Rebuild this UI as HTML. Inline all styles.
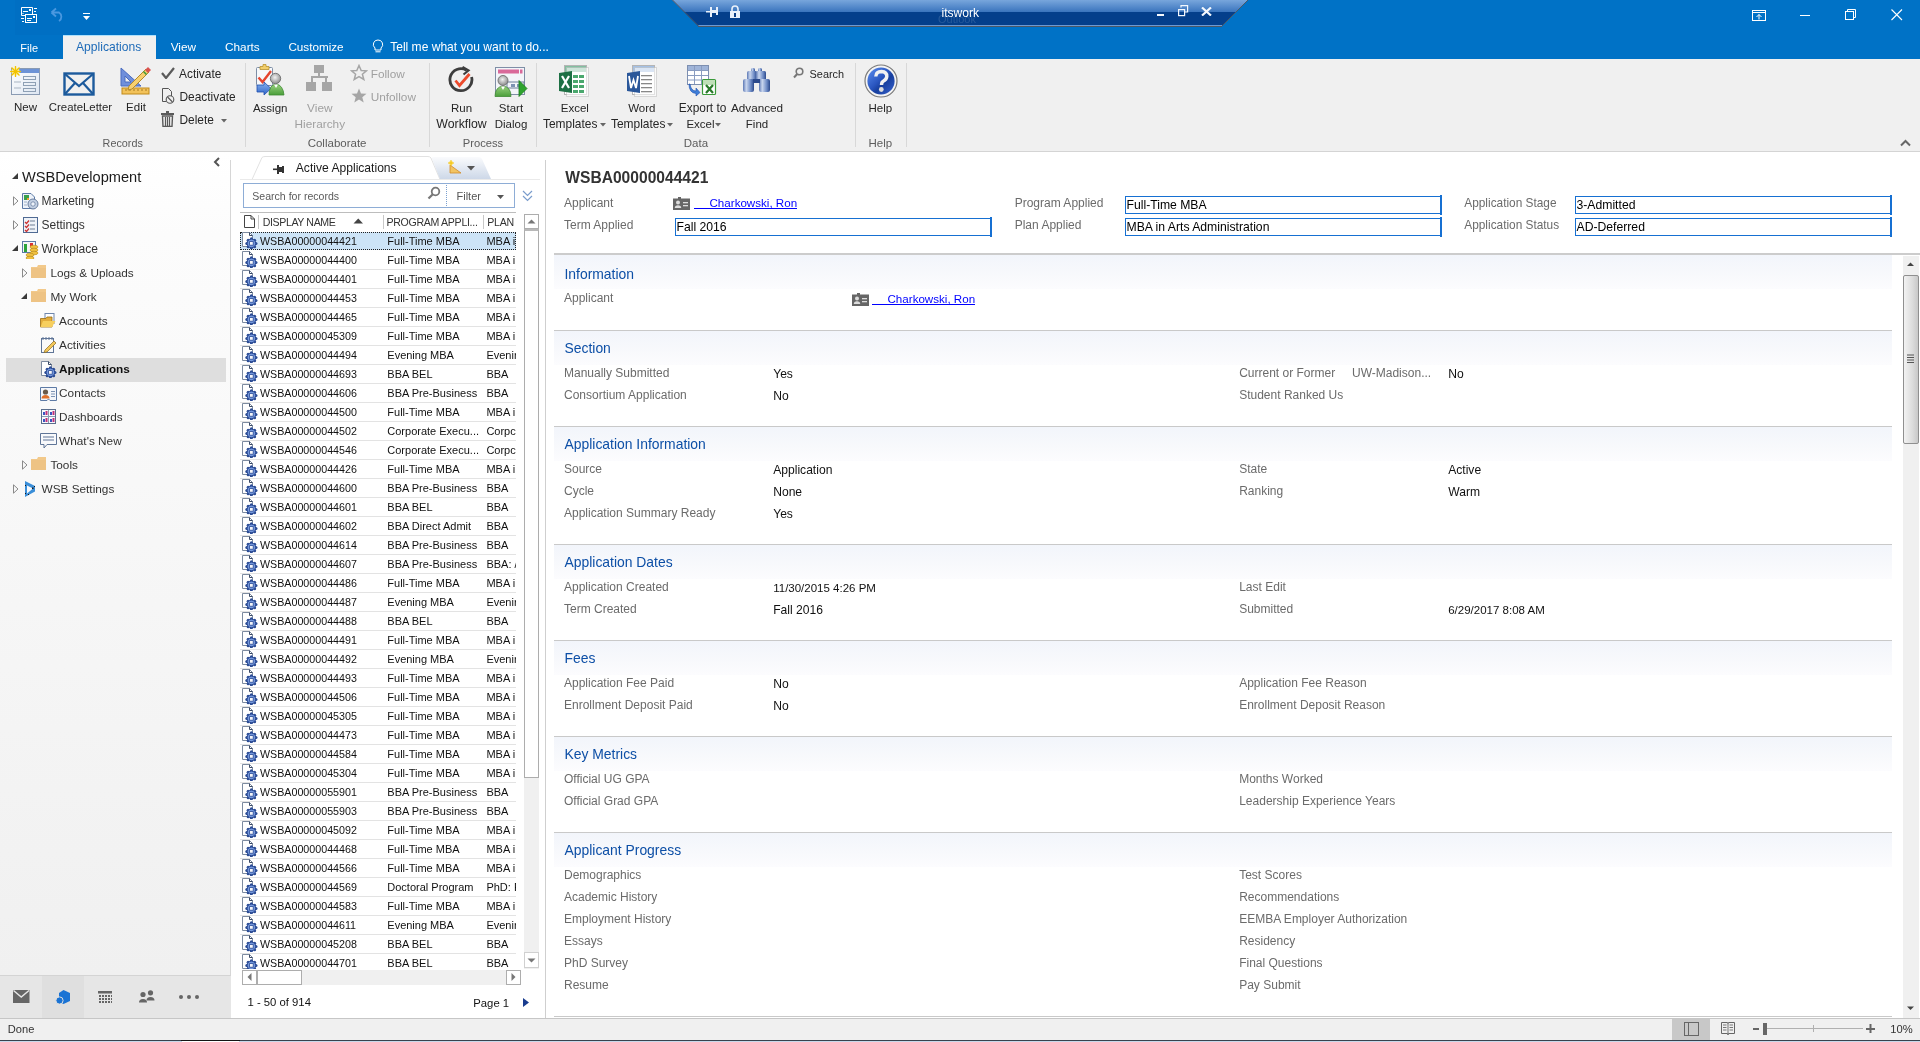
<!DOCTYPE html>
<html><head><meta charset="utf-8"><title>Applications</title>
<style>
html,body{margin:0;padding:0;}
body{width:1920px;height:1042px;overflow:hidden;position:relative;background:#f0f0f0;font-family:"Liberation Sans", sans-serif;}
.t{position:absolute;white-space:nowrap;}
#root{position:absolute;left:0;top:0;width:1920px;height:1042px;overflow:hidden;will-change:transform;}
.r{position:absolute;}
</style></head><body>
<div id="root"><div class="r" style="left:0px;top:0px;width:1920px;height:59px;background:#0072c6;"></div><div class="r" style="left:15px;top:0px;width:85px;height:35px;background:#006fc3;"></div><svg class="r" style="left:20px;top:6px;" width="18" height="18" viewBox="0 0 18 18"><g fill="none" stroke="#fff" stroke-width="1"><path d="M12.5 8.5 V1.5 H1.5 V9.5 H5"/><rect x="5.5" y="8.5" width="11" height="8"/></g><g fill="#fff"><rect x="3" y="5" width="5" height="1"/><rect x="9" y="3" width="2" height="2"/><rect x="2.5" y="7" width="1" height="1"/><rect x="14" y="2" width="3" height="1"/><rect x="14" y="5" width="2" height="1"/><rect x="1" y="12" width="3" height="1"/><rect x="2" y="15" width="2" height="1"/><rect x="7" y="12" width="5" height="1"/><rect x="7" y="14" width="4" height="1"/><rect x="13" y="10" width="2" height="2"/></g></svg><svg class="r" style="left:50px;top:7px;" width="16" height="15" viewBox="0 0 16 15"><path d="M1.5 5.5 L6 1.5 M1.5 5.5 L6 9.5 M1.5 5.5 H9 A5 5 0 0 1 9 14" fill="none" stroke="#4a98e0" stroke-width="1.8"/></svg><svg class="r" style="left:83px;top:13px;" width="8" height="8" viewBox="0 0 8 8"><rect x="0" y="0" width="7" height="1" fill="#fff"/><path d="M0 3 H7 L3.5 7 Z" fill="#fff"/></svg><svg class="r" style="left:672px;top:0px;" width="577" height="28" viewBox="0 0 577 28"><defs><linearGradient id="rg" x1="0" y1="0" x2="0" y2="1"><stop offset="0" stop-color="#78a6dc"/><stop offset="1" stop-color="#3a74bd"/></linearGradient></defs>
<polygon points="0,0 576,0 550,26 26,26" fill="#043f8b"/>
<polygon points="0,0 576,0 564,12 12,12" fill="url(#rg)"/>
<line x1="26" y1="25.5" x2="550" y2="25.5" stroke="#6e9ad2" stroke-width="1"/>
<line x1="26" y1="26.5" x2="550" y2="26.5" stroke="#4c5866" stroke-width="1"/>
<line x1="0.5" y1="0" x2="26.5" y2="26" stroke="#4c5866" stroke-width="1"/>
<line x1="576" y1="0" x2="550" y2="26" stroke="#4c5866" stroke-width="1"/></svg><svg class="r" style="left:706px;top:6px;" width="14" height="12" viewBox="0 0 14 12"><g fill="#e8f0fa"><rect x="0" y="5" width="5" height="1.5"/><rect x="4" y="1" width="2" height="10"/><rect x="5" y="4" width="6" height="3"/><rect x="10" y="1" width="2" height="8"/></g></svg><svg class="r" style="left:729px;top:5px;" width="12" height="13" viewBox="0 0 12 13"><path d="M3 6 V4 A3 3 0 0 1 9 4 V6" fill="none" stroke="#e8f0fa" stroke-width="1.6"/><rect x="1" y="6" width="10" height="7" fill="#e8f0fa"/><rect x="5" y="8" width="2" height="4" fill="#0c3f86"/></svg><div class="t" style="left:941.5px;top:3px;font-size:12.1px;line-height:20px;color:#ffffff;font-weight:normal;">itswork</div><div class="t" style="left:938.0px;top:9px;font-size:11px;line-height:20px;color:rgba(160,180,210,0.22);font-weight:normal;">Outlook</div><div class="r" style="left:1157px;top:14px;width:7px;height:2px;background:#f4f8fd;"></div><svg class="r" style="left:1178px;top:5px;" width="11" height="12" viewBox="0 0 11 12"><g fill="none" stroke="#f4f8fd" stroke-width="1.2"><rect x="0.6" y="4.6" width="6" height="6"/><path d="M3 2.6 V0.6 H9.6 V7 H7"/></g></svg><svg class="r" style="left:1201px;top:7px;" width="11" height="9" viewBox="0 0 11 9"><path d="M1 0.5 L10 8.5 M10 0.5 L1 8.5" stroke="#f4f8fd" stroke-width="2.2"/></svg><svg class="r" style="left:1752px;top:10px;" width="14" height="11" viewBox="0 0 14 11"><g fill="none" stroke="#fff" stroke-width="1"><rect x="0.5" y="0.5" width="13" height="10"/><line x1="0.5" y1="2.5" x2="13.5" y2="2.5"/><path d="M7 9.5 V4.5 M4.5 7 L7 4.5 L9.5 7"/></g></svg><div class="r" style="left:1800px;top:15px;width:10px;height:1px;background:#fff;"></div><svg class="r" style="left:1845px;top:9px;" width="12" height="12" viewBox="0 0 12 12"><g fill="none" stroke="#fff" stroke-width="1"><rect x="0.5" y="2.5" width="8" height="8"/><path d="M2.5 2.5 V0.5 H10.5 V8.5 H8.5"/></g></svg><svg class="r" style="left:1891px;top:9px;" width="12" height="12" viewBox="0 0 12 12"><path d="M0.5 0.5 L11 11 M11 0.5 L0.5 11" stroke="#fff" stroke-width="1.1"/></svg><div class="r" style="left:63px;top:35px;width:93px;height:24px;background:#f0f0f0;border-top:1px solid #aee0fb;box-sizing:border-box;"></div><div class="t" style="left:20.3px;top:38px;font-size:11px;line-height:20px;color:#ffffff;font-weight:normal;">File</div><div class="t" style="left:76.0px;top:37px;font-size:12.1px;line-height:20px;color:#1e6bb8;font-weight:normal;">Applications</div><div class="t" style="left:170.7px;top:37px;font-size:11.8px;line-height:20px;color:#ffffff;font-weight:normal;">View</div><div class="t" style="left:225.0px;top:37px;font-size:11.8px;line-height:20px;color:#ffffff;font-weight:normal;">Charts</div><div class="t" style="left:288.4px;top:37px;font-size:11.7px;line-height:20px;color:#ffffff;font-weight:normal;">Customize</div><svg class="r" style="left:372px;top:39px;" width="12" height="15" viewBox="0 0 12 15"><path d="M6 1 A4.5 4.5 0 0 0 3 9 V11 H9 V9 A4.5 4.5 0 0 0 6 1 Z" fill="none" stroke="#fff" stroke-width="1"/><line x1="3.5" y1="12.8" x2="8.5" y2="12.8" stroke="#fff" stroke-width="1"/></svg><div class="t" style="left:390.2px;top:37px;font-size:12.05px;line-height:20px;color:#ffffff;font-weight:normal;">Tell me what you want to do...</div><div class="r" style="left:0px;top:59px;width:1920px;height:92px;background:#f0f0f0;"></div><div class="r" style="left:0px;top:151px;width:1920px;height:1px;background:#d4d4d4;"></div><div class="r" style="left:245px;top:63px;width:1px;height:84px;background:#d8d8d8;"></div><div class="r" style="left:429px;top:63px;width:1px;height:84px;background:#d8d8d8;"></div><div class="r" style="left:536px;top:63px;width:1px;height:84px;background:#d8d8d8;"></div><div class="r" style="left:855px;top:63px;width:1px;height:84px;background:#d8d8d8;"></div><div class="r" style="left:906px;top:63px;width:1px;height:84px;background:#d8d8d8;"></div><svg class="r" style="left:10px;top:66px;" width="31" height="29" viewBox="0 0 31 29"><defs><linearGradient id="ng" x1="0" y1="0" x2="1" y2="1"><stop offset="0" stop-color="#ffffff"/><stop offset="1" stop-color="#dde6f2"/></linearGradient></defs>
<rect x="1.5" y="2.5" width="28" height="26" fill="url(#ng)" stroke="#8a9bb3"/>
<rect x="2" y="3" width="27" height="4" fill="#6d93d6"/>
<g fill="none" stroke="#8ea0b5"><rect x="13.5" y="10.5" width="12" height="3"/><rect x="13.5" y="16.5" width="12" height="3"/><rect x="13.5" y="22.5" width="12" height="3"/></g>
<g stroke="#a9b5c3"><line x1="4" y1="16" x2="11" y2="16"/><line x1="4" y1="22" x2="11" y2="22"/></g>
<circle cx="5.5" cy="5.5" r="4" fill="#fff3a0"/><g stroke="#f2c200" stroke-width="1.3"><line x1="5.5" y1="0" x2="5.5" y2="11"/><line x1="0" y1="5.5" x2="11" y2="5.5"/><line x1="1.5" y1="1.5" x2="9.5" y2="9.5"/><line x1="9.5" y1="1.5" x2="1.5" y2="9.5"/></g></svg><div class="t" style="left:-174.5px;width:400px;text-align:center;top:97px;font-size:11.5px;line-height:20px;color:#262626;font-weight:normal;">New</div><svg class="r" style="left:63px;top:72px;" width="33" height="25" viewBox="0 0 33 25"><rect x="1.5" y="1.5" width="29" height="21" fill="none" stroke="#1c5a9c" stroke-width="2.4"/><path d="M2 2 L16 14 L30 2 M2 22 L12 11 M30 22 L20 11" fill="none" stroke="#1c5a9c" stroke-width="2.2"/></svg><div class="t" style="left:48.8px;top:97px;font-size:11.4px;line-height:20px;color:#262626;font-weight:normal;">CreateLetter</div><svg class="r" style="left:120px;top:66px;" width="31" height="30" viewBox="0 0 31 30"><path d="M1 2 L21 20 H1 Z" fill="#6f8fdb" stroke="#4a6cc0"/><path d="M5 10 L11 16 H5 Z" fill="#f0f0f0" stroke="#4a6cc0"/>
<rect x="2" y="22" width="27" height="6" fill="#f2c25a" stroke="#c08a1a"/><g stroke="#a87a20"><line x1="6" y1="23" x2="6" y2="25"/><line x1="10" y1="23" x2="10" y2="25"/><line x1="14" y1="23" x2="14" y2="25"/><line x1="18" y1="23" x2="18" y2="25"/><line x1="22" y1="23" x2="22" y2="25"/><line x1="26" y1="23" x2="26" y2="25"/></g>
<path d="M9 20 L26 3 L29 6 L12 23 L8 24 Z" fill="#f7d070" stroke="#b58a2a"/><path d="M25 4 L28 1 L31 4 L28 7 Z" fill="#d9534f"/><path d="M23.5 5.5 L26.5 8.5" stroke="#3a9a3a" stroke-width="1.5"/></svg><div class="t" style="left:-64.0px;width:400px;text-align:center;top:97px;font-size:11.5px;line-height:20px;color:#262626;font-weight:normal;">Edit</div><svg class="r" style="left:161px;top:67px;" width="14" height="12" viewBox="0 0 14 12"><path d="M1 6 L5 11 L13 1" fill="none" stroke="#5a5a5a" stroke-width="2.2"/></svg><div class="t" style="left:179.0px;top:64px;font-size:11.9px;line-height:20px;color:#262626;font-weight:normal;">Activate</div><svg class="r" style="left:162px;top:88px;" width="13" height="16" viewBox="0 0 13 16"><path d="M0.5 0.5 H6.5 L9.5 3.5 V8 M0.5 0.5 V13.5 H4" fill="none" stroke="#555" stroke-width="1"/><circle cx="8" cy="11.5" r="3.8" fill="#f0f0f0" stroke="#555" stroke-width="1.1"/><line x1="5.5" y1="9" x2="10.5" y2="14" stroke="#555" stroke-width="1.1"/></svg><div class="t" style="left:179.5px;top:87px;font-size:11.9px;line-height:20px;color:#262626;font-weight:normal;">Deactivate</div><svg class="r" style="left:161px;top:111px;" width="14" height="16" viewBox="0 0 14 16"><rect x="0" y="2" width="13" height="2" fill="#5a5a5a"/><rect x="5" y="0" width="3" height="2" fill="#5a5a5a"/><path d="M1.5 5 H11.5 L11 15.5 H2 Z" fill="none" stroke="#5a5a5a" stroke-width="1.4"/><g stroke="#5a5a5a" stroke-width="1.2"><line x1="4.5" y1="6" x2="4.5" y2="15"/><line x1="6.5" y1="6" x2="6.5" y2="15"/><line x1="8.5" y1="6" x2="8.5" y2="15"/></g></svg><div class="t" style="left:179.5px;top:110px;font-size:11.9px;line-height:20px;color:#262626;font-weight:normal;">Delete</div><svg class="r" style="left:221px;top:119px;" width="7" height="4" viewBox="0 0 7 4"><path d="M0 0 H6 L3 3.5 Z" fill="#666"/></svg><div class="t" style="left:-77.3px;width:400px;text-align:center;top:133px;font-size:10.8px;line-height:20px;color:#5c5c5c;font-weight:normal;">Records</div><svg class="r" style="left:255px;top:63px;" width="31" height="34" viewBox="0 0 31 34"><defs><radialGradient id="ah" cx="0.45" cy="0.4" r="0.6"><stop offset="0" stop-color="#f2f2f2"/><stop offset="1" stop-color="#8c8c8c"/></radialGradient><linearGradient id="ab" x1="0" y1="0" x2="0" y2="1"><stop offset="0" stop-color="#9ad27f"/><stop offset="1" stop-color="#4a9e3a"/></linearGradient><linearGradient id="aa" x1="0" y1="0" x2="0" y2="1"><stop offset="0" stop-color="#8ab4ef"/><stop offset="1" stop-color="#2f64c8"/></linearGradient></defs>
<rect x="1.5" y="4.5" width="16" height="18" rx="1" fill="#f6f8fb" stroke="#7d8ea5"/><path d="M5 6.5 V3.5 H8 V1.5 H11 V3.5 H14 V6.5 Z" fill="#f3cf6a" stroke="#b8922e" stroke-width="0.8"/>
<path d="M3.5 14.5 L7.5 19 L16 8" fill="none" stroke="#e5452f" stroke-width="2.4"/>
<path d="M2 22 H9 V19 L16 25.5 L9 32 V29 H2 Z" fill="url(#aa)" stroke="#1f4fae" stroke-width="0.8"/>
<path d="M14 32 Q14 22 21 21 Q28 22 29 32 Z" fill="url(#ab)" stroke="#3f8a34" stroke-width="0.8"/><path d="M19 21.5 L21 25 L23 21.5 Z" fill="#fff"/>
<circle cx="20.5" cy="15.5" r="5.2" fill="url(#ah)" stroke="#6e6e6e" stroke-width="0.9"/></svg><div class="t" style="left:70.2px;width:400px;text-align:center;top:98px;font-size:11.5px;line-height:20px;color:#262626;font-weight:normal;">Assign</div><svg class="r" style="left:306px;top:65px;" width="27" height="28" viewBox="0 0 27 28"><g fill="#a6a6a6"><rect x="8" y="0" width="10" height="8"/><rect x="12" y="8" width="2" height="4"/><rect x="5" y="11" width="17" height="2"/><rect x="5" y="11" width="2" height="6"/><rect x="19" y="11" width="2" height="6"/><rect x="0" y="17" width="10" height="9"/><rect x="16" y="17" width="10" height="9"/></g></svg><div class="t" style="left:119.8px;width:400px;text-align:center;top:98px;font-size:11.8px;line-height:20px;color:#a0a0a0;font-weight:normal;">View</div><div class="t" style="left:119.8px;width:400px;text-align:center;top:114px;font-size:11.8px;line-height:20px;color:#a0a0a0;font-weight:normal;">Hierarchy</div><svg class="r" style="left:350px;top:64px;" width="18" height="17" viewBox="0 0 18 17"><path d="M9 1.5 L11.2 6.5 L16.5 6.8 L12.4 10.3 L13.8 15.5 L9 12.6 L4.2 15.5 L5.6 10.3 L1.5 6.8 L6.8 6.5 Z" fill="none" stroke="#a6a6a6" stroke-width="1.5"/></svg><div class="t" style="left:370.7px;top:64px;font-size:11.8px;line-height:20px;color:#a0a0a0;font-weight:normal;">Follow</div><svg class="r" style="left:351px;top:88px;" width="16" height="15" viewBox="0 0 16 15"><path d="M8 0.5 L10 5.5 L15.5 5.8 L11.3 9.3 L12.7 14.5 L8 11.6 L3.3 14.5 L4.7 9.3 L0.5 5.8 L6 5.5 Z" fill="#a6a6a6"/></svg><div class="t" style="left:370.7px;top:87px;font-size:11.8px;line-height:20px;color:#a0a0a0;font-weight:normal;">Unfollow</div><div class="t" style="left:137.1px;width:400px;text-align:center;top:133px;font-size:11.5px;line-height:20px;color:#5c5c5c;font-weight:normal;">Collaborate</div><svg class="r" style="left:448px;top:66px;" width="27" height="29" viewBox="0 0 27 29"><path d="M18.5 4.2 A11 11 0 1 0 23.6 11" fill="none" stroke="#3d3d3d" stroke-width="2.8"/><path d="M14.5 1 L20.5 4.5 L15.5 8.5" fill="none" stroke="#3d3d3d" stroke-width="2.2"/><path d="M7.5 14.5 L11.5 19.5 L21.5 8" fill="none" stroke="#ec4a2c" stroke-width="2.8"/></svg><div class="t" style="left:261.5px;width:400px;text-align:center;top:98px;font-size:11.5px;line-height:20px;color:#262626;font-weight:normal;">Run</div><div class="t" style="left:261.5px;width:400px;text-align:center;top:114px;font-size:12.3px;line-height:20px;color:#262626;font-weight:normal;">Workflow</div><svg class="r" style="left:494px;top:66px;" width="35" height="32" viewBox="0 0 35 32"><defs><radialGradient id="sh" cx="0.45" cy="0.4" r="0.6"><stop offset="0" stop-color="#f0f0f0"/><stop offset="1" stop-color="#8a8a8a"/></radialGradient><linearGradient id="sb" x1="0" y1="0" x2="0" y2="1"><stop offset="0" stop-color="#9ad27f"/><stop offset="1" stop-color="#4a9e3a"/></linearGradient></defs>
<rect x="1.5" y="1.5" width="29" height="27" fill="#f3f5f9" stroke="#7f8ea6"/><rect x="4" y="3.5" width="21" height="4" fill="#d9699a"/><rect x="26" y="3.5" width="2.5" height="4" fill="#d9699a"/>
<rect x="13" y="16" width="17" height="6" fill="none" stroke="#6d7f99"/><rect x="17" y="18" width="4" height="3" fill="#7d93b3"/><rect x="23" y="18" width="5" height="3" fill="#7d93b3"/>
<path d="M1 30.5 Q1 21 9 20 Q17 21 17 30.5 Z" fill="url(#sb)" stroke="#3f8a34" stroke-width="0.8"/><path d="M7 20.5 L9 24 L11 20.5 Z" fill="#fff"/>
<circle cx="9" cy="14.5" r="5" fill="url(#sh)" stroke="#6e6e6e" stroke-width="0.9"/>
<path d="M25 14.5 L33 22.5 L25 30.5 Z" fill="#2ea32e" stroke="#157a15" stroke-width="0.8"/></svg><div class="t" style="left:311.0px;width:400px;text-align:center;top:98px;font-size:11.5px;line-height:20px;color:#262626;font-weight:normal;">Start</div><div class="t" style="left:311.0px;width:400px;text-align:center;top:114px;font-size:11.5px;line-height:20px;color:#262626;font-weight:normal;">Dialog</div><div class="t" style="left:283.0px;width:400px;text-align:center;top:133px;font-size:11.2px;line-height:20px;color:#5c5c5c;font-weight:normal;">Process</div><svg class="r" style="left:559px;top:65px;" width="30" height="32" viewBox="0 0 30 32"><rect x="5.5" y="0.5" width="22" height="29" fill="#fff" stroke="#b5b5b5"/><rect x="6" y="1" width="21" height="6" fill="#82bfa0"/><rect x="7.5" y="2.5" width="22" height="29" fill="#fff" stroke="#c5c5c5" opacity="0.6"/>
<g fill="#4aa86e"><rect x="14" y="10" width="5" height="3"/><rect x="20" y="10" width="5" height="3"/><rect x="14" y="15" width="5" height="3"/><rect x="20" y="15" width="5" height="3"/><rect x="14" y="20" width="5" height="3"/><rect x="20" y="20" width="5" height="3"/><rect x="14" y="25" width="5" height="3"/><rect x="20" y="25" width="5" height="3"/></g>
<path d="M0 8 L13 6 V28 L0 26 Z" fill="#1d7044"/><path d="M3 11 L10 23 M10 11 L3 23" stroke="#fff" stroke-width="2.2"/></svg><div class="t" style="left:374.8px;width:400px;text-align:center;top:98px;font-size:11.5px;line-height:20px;color:#262626;font-weight:normal;">Excel</div><div class="t" style="left:543.0px;top:114px;font-size:11.95px;line-height:20px;color:#262626;font-weight:normal;">Templates</div><svg class="r" style="left:600px;top:123px;" width="7" height="4" viewBox="0 0 7 4"><path d="M0 0 H6 L3 3.5 Z" fill="#666"/></svg><svg class="r" style="left:627px;top:65px;" width="30" height="32" viewBox="0 0 30 32"><rect x="5.5" y="0.5" width="22" height="29" fill="#fff" stroke="#b5b5b5"/><rect x="6" y="1" width="21" height="6" fill="#a4c0e4"/><rect x="7.5" y="2.5" width="22" height="29" fill="#fff" stroke="#c5c5c5" opacity="0.6"/>
<g fill="#888"><rect x="14" y="10" width="11" height="1.3"/><rect x="14" y="14" width="11" height="1.3"/><rect x="14" y="18" width="11" height="1.3"/><rect x="14" y="22" width="11" height="1.3"/><rect x="14" y="26" width="11" height="1.3"/></g>
<path d="M0 8 L13 6 V28 L0 26 Z" fill="#2a579a"/><path d="M2 11 L4 23 L6.5 15 L9 23 L11 11" fill="none" stroke="#fff" stroke-width="1.8"/></svg><div class="t" style="left:441.8px;width:400px;text-align:center;top:98px;font-size:11.5px;line-height:20px;color:#262626;font-weight:normal;">Word</div><div class="t" style="left:611.0px;top:114px;font-size:11.95px;line-height:20px;color:#262626;font-weight:normal;">Templates</div><svg class="r" style="left:667px;top:123px;" width="7" height="4" viewBox="0 0 7 4"><path d="M0 0 H6 L3 3.5 Z" fill="#666"/></svg><svg class="r" style="left:686px;top:64px;" width="32" height="33" viewBox="0 0 32 33"><rect x="1.5" y="1.5" width="21" height="19" fill="#fff" stroke="#7d8fb0"/><rect x="2" y="2" width="20" height="4" fill="#9fb4d8"/>
<g stroke="#8a9cc0"><line x1="8.5" y1="2" x2="8.5" y2="20"/><line x1="15.5" y1="2" x2="15.5" y2="20"/><line x1="2" y1="6.5" x2="22" y2="6.5"/><line x1="2" y1="11.5" x2="22" y2="11.5"/><line x1="2" y1="16" x2="22" y2="16"/></g>
<path d="M4 20 Q5 27 10 27 V24 L14 28.5 L10 32 V29.5 Q3 29 3 20 Z" fill="#3f7fd8" stroke="#1f4fae" stroke-width="0.6"/>
<rect x="16.5" y="15.5" width="13" height="15" rx="1" fill="#fff" stroke="#3a9a3a" stroke-width="1.2"/><rect x="17" y="16" width="12" height="5" fill="#bfe0b8"/><path d="M20 21 L27 29 M27 21 L20 29" stroke="#2a7a2a" stroke-width="2.2"/></svg><div class="t" style="left:502.6px;width:400px;text-align:center;top:98px;font-size:11.9px;line-height:20px;color:#262626;font-weight:normal;">Export to</div><div class="t" style="left:686.4px;top:114px;font-size:11.5px;line-height:20px;color:#262626;font-weight:normal;">Excel</div><svg class="r" style="left:715px;top:123px;" width="7" height="4" viewBox="0 0 7 4"><path d="M0 0 H6 L3 3.5 Z" fill="#666"/></svg><svg class="r" style="left:742px;top:67px;" width="29" height="26" viewBox="0 0 29 26"><defs><linearGradient id="bg1" x1="0" y1="0" x2="1" y2="0"><stop offset="0" stop-color="#5d79b5"/><stop offset="0.3" stop-color="#c9d6ee"/><stop offset="0.7" stop-color="#6f8cc6"/><stop offset="1" stop-color="#2c4a8c"/></linearGradient></defs>
<g fill="url(#bg1)"><rect x="9" y="1" width="4" height="4" rx="1.5"/><rect x="16" y="1" width="4" height="4" rx="1.5"/><rect x="5" y="4" width="10" height="9" rx="1.5"/><rect x="14" y="4" width="10" height="9" rx="1.5"/><rect x="1" y="12" width="11" height="13" rx="2"/><rect x="17" y="12" width="11" height="13" rx="2"/></g><rect x="11" y="12" width="7" height="4" fill="#2c4a8c"/></svg><div class="t" style="left:557.0px;width:400px;text-align:center;top:98px;font-size:11.7px;line-height:20px;color:#262626;font-weight:normal;">Advanced</div><div class="t" style="left:557.0px;width:400px;text-align:center;top:114px;font-size:11.5px;line-height:20px;color:#262626;font-weight:normal;">Find</div><svg class="r" style="left:793px;top:67px;" width="11" height="12" viewBox="0 0 11 12"><circle cx="6.5" cy="4.5" r="3.3" fill="none" stroke="#777" stroke-width="1.6"/><line x1="4.2" y1="7" x2="1" y2="10.5" stroke="#777" stroke-width="2"/></svg><div class="t" style="left:809.6px;top:64px;font-size:10.9px;line-height:20px;color:#262626;font-weight:normal;">Search</div><div class="t" style="left:495.9px;width:400px;text-align:center;top:133px;font-size:11.5px;line-height:20px;color:#5c5c5c;font-weight:normal;">Data</div><svg class="r" style="left:864px;top:64px;" width="34" height="34" viewBox="0 0 34 34"><defs><linearGradient id="hg" x1="0" y1="0" x2="1" y2="1"><stop offset="0" stop-color="#5d8ff0"/><stop offset="0.45" stop-color="#2a56c0"/><stop offset="0.6" stop-color="#173f9e"/><stop offset="1" stop-color="#3a64d0"/></linearGradient></defs>
<circle cx="17" cy="17" r="16" fill="#f4f4f4" stroke="#7a7a7a" stroke-width="1.2"/><circle cx="17" cy="17" r="13.6" fill="url(#hg)"/>
<path d="M11.8 12.5 Q12 7.5 17.5 7.5 Q23 7.8 22.8 12.5 Q22.5 15.5 19.5 17 Q17.5 18 17.5 21" fill="none" stroke="#f2f2f2" stroke-width="3.4"/><circle cx="17.3" cy="25.5" r="2.4" fill="#dcdcdc"/></svg><div class="t" style="left:680.4px;width:400px;text-align:center;top:98px;font-size:11.5px;line-height:20px;color:#262626;font-weight:normal;">Help</div><div class="t" style="left:680.4px;width:400px;text-align:center;top:133px;font-size:11.5px;line-height:20px;color:#5c5c5c;font-weight:normal;">Help</div><svg class="r" style="left:1900px;top:139px;" width="11" height="8" viewBox="0 0 11 8"><path d="M1 6.5 L5.5 2 L10 6.5" fill="none" stroke="#666" stroke-width="2"/></svg><div class="r" style="left:0px;top:152px;width:231px;height:823px;background:linear-gradient(#ffffff, #fcfcfc 10%, #f0f0f0);"></div><div class="r" style="left:230px;top:160px;width:1px;height:815px;background:#d6d6d6;"></div><svg class="r" style="left:213px;top:157px;" width="8" height="10" viewBox="0 0 8 10"><path d="M6 1 L2 5 L6 9" fill="none" stroke="#555" stroke-width="2"/></svg><svg class="r" style="left:12px;top:173px;" width="7" height="7" viewBox="0 0 7 7"><path d="M6 0 V6 H0 Z" fill="#3a3a3a"/></svg><div class="t" style="left:22.0px;top:167px;font-size:14.6px;line-height:20px;color:#1a1a1a;font-weight:normal;">WSBDevelopment</div><svg class="r" style="left:13px;top:196px;" width="6" height="10" viewBox="0 0 6 10"><path d="M0.5 0.8 L5 5 L0.5 9.2 Z" fill="none" stroke="#8a8a8a" stroke-width="1"/></svg><svg class="r" style="left:22px;top:193px;" width="17" height="17" viewBox="0 0 17 17"><path d="M0.5 0.5 H9 L12.5 4 V15.5 H0.5 Z" fill="#eef3fa" stroke="#5d7aa5"/><rect x="2" y="2" width="5" height="5" fill="#3aa04a"/><rect x="5" y="5" width="2" height="2" fill="#f0a030"/><g stroke="#9fb0c8"><line x1="2" y1="9" x2="5" y2="9"/><line x1="2" y1="12" x2="5" y2="12"/></g><circle cx="11" cy="11" r="5" fill="#c3d0e2" stroke="#5f7496" stroke-width="0.9"/><circle cx="11" cy="11" r="2.2" fill="#eef3fa" stroke="#5f7496" stroke-width="0.7"/></svg><div class="t" style="left:41.5px;top:191px;font-size:12px;line-height:20px;color:#333333;font-weight:normal;">Marketing</div><svg class="r" style="left:13px;top:220px;" width="6" height="10" viewBox="0 0 6 10"><path d="M0.5 0.8 L5 5 L0.5 9.2 Z" fill="none" stroke="#8a8a8a" stroke-width="1"/></svg><svg class="r" style="left:23px;top:217px;" width="15" height="16" viewBox="0 0 15 16"><rect x="0.5" y="0.5" width="14" height="15" fill="#eef2f8" stroke="#4f6a93"/><g stroke="#c33" stroke-width="1.3" fill="none"><path d="M2 5 L3.5 6.5 L6 3.5"/><path d="M2 9 L3.5 10.5 L6 7.5"/><path d="M2 13 L3.5 14.5 L6 11.5"/></g><g stroke="#6d7d93"><line x1="7" y1="4" x2="12" y2="4"/><line x1="7" y1="8" x2="12" y2="8"/><line x1="7" y1="12" x2="12" y2="12"/></g></svg><div class="t" style="left:41.5px;top:215px;font-size:12px;line-height:20px;color:#333333;font-weight:normal;">Settings</div><svg class="r" style="left:12px;top:245px;" width="7" height="7" viewBox="0 0 7 7"><path d="M6 0 V6 H0 Z" fill="#3a3a3a"/></svg><svg class="r" style="left:22px;top:241px;" width="17" height="18" viewBox="0 0 17 18"><rect x="0.5" y="0.5" width="13" height="11" fill="#f5f5f5" stroke="#5d7aa5"/><rect x="2" y="3" width="3" height="8" fill="#2da33a"/><rect x="8" y="2" width="3" height="4" fill="#d33"/><g fill="#f0c040" stroke="#b58a1a" stroke-width="0.6"><ellipse cx="12" cy="6" rx="4" ry="1.8"/><ellipse cx="12" cy="9" rx="4" ry="1.8"/><ellipse cx="12" cy="12" rx="4" ry="1.8"/><ellipse cx="8" cy="14" rx="4" ry="1.8"/><ellipse cx="8" cy="17" rx="4" ry="1.8"/></g></svg><div class="t" style="left:41.5px;top:239px;font-size:12px;line-height:20px;color:#333333;font-weight:normal;">Workplace</div><svg class="r" style="left:22px;top:268px;" width="6" height="10" viewBox="0 0 6 10"><path d="M0.5 0.8 L5 5 L0.5 9.2 Z" fill="none" stroke="#8a8a8a" stroke-width="1"/></svg><svg class="r" style="left:31px;top:265px;" width="16" height="14" viewBox="0 0 16 14"><path d="M0 2 H6 L7 0 H15 V13 H0 Z" fill="#f2c98b"/><path d="M0 3 H15 V13 H0 Z" fill="#eec384"/></svg><div class="t" style="left:50.4px;top:263px;font-size:11.8px;line-height:20px;color:#333333;font-weight:normal;">Logs &amp; Uploads</div><svg class="r" style="left:21px;top:293px;" width="7" height="7" viewBox="0 0 7 7"><path d="M6 0 V6 H0 Z" fill="#3a3a3a"/></svg><svg class="r" style="left:31px;top:289px;" width="16" height="14" viewBox="0 0 16 14"><path d="M0 2 H6 L7 0 H15 V13 H0 Z" fill="#f2c98b"/><path d="M0 3 H15 V13 H0 Z" fill="#eec384"/></svg><div class="t" style="left:50.4px;top:287px;font-size:11.8px;line-height:20px;color:#333333;font-weight:normal;">My Work</div><div class="r" style="left:6px;top:358px;width:220px;height:24px;background:#dedede;"></div><svg class="r" style="left:40px;top:313px;" width="16" height="15" viewBox="0 0 16 15"><rect x="5" y="0.5" width="9" height="10" fill="#fff" stroke="#6f87ad"/><path d="M0.5 5.5 H6 L7 4 H12 V14 H0.5 Z" fill="#e3ad3c" stroke="#9a6d12" stroke-width="0.8"/><path d="M3 8 H15.5 L12 14 H0.5 Z" fill="#f7cf5e"/></svg><div class="t" style="left:59.1px;top:311px;font-size:11.8px;line-height:20px;color:#333333;font-weight:normal;">Accounts</div><svg class="r" style="left:41px;top:337px;" width="15" height="16" viewBox="0 0 15 16"><rect x="0.5" y="1.5" width="12" height="14" fill="#fafafa" stroke="#5f7597"/><g stroke="#5f7597"><line x1="2" y1="0" x2="2" y2="3"/><line x1="5" y1="0" x2="5" y2="3"/><line x1="8" y1="0" x2="8" y2="3"/><line x1="11" y1="0" x2="11" y2="3"/></g><path d="M4 13 L13 4 L15 6 L6 15 L3 15.5 Z" fill="#f4c85a" stroke="#8a6a20" stroke-width="0.7"/></svg><div class="t" style="left:59.1px;top:335px;font-size:11.8px;line-height:20px;color:#333333;font-weight:normal;">Activities</div><div class="t" style="left:59.1px;top:359px;font-size:11.8px;line-height:20px;color:#111;font-weight:bold;">Applications</div><svg class="r" style="left:40px;top:385px;" width="17" height="16" viewBox="0 0 17 16"><path d="M0.5 2.5 H16.5 V15.5 H10 L8.5 14 L7 15.5 H0.5 Z" fill="#f4f6fa" stroke="#5d7aa5"/><circle cx="5.5" cy="7" r="2.6" fill="#6a5a4a"/><path d="M1.5 13.5 A4 3.5 0 0 1 9.5 13.5 Z" fill="#e0702a"/><g stroke="#7d93b3"><line x1="11" y1="6.5" x2="15" y2="6.5"/><line x1="11" y1="9" x2="15" y2="9"/><line x1="11" y1="11.5" x2="15" y2="11.5"/></g></svg><div class="t" style="left:59.1px;top:383px;font-size:11.8px;line-height:20px;color:#333333;font-weight:normal;">Contacts</div><svg class="r" style="left:41px;top:409px;" width="15" height="15" viewBox="0 0 15 15"><rect x="0.5" y="0.5" width="14" height="14" fill="#f7f9fc" stroke="#5a6d8c"/><line x1="7.5" y1="1" x2="7.5" y2="14" stroke="#8d9bb3"/><line x1="1" y1="7.5" x2="14" y2="7.5" stroke="#8d9bb3"/><g fill="#3a55c0"><rect x="2" y="3" width="2" height="3"/><rect x="9" y="3" width="2" height="3"/><rect x="2" y="10" width="2" height="3"/><rect x="9" y="10" width="2" height="3"/></g><g fill="#c0307a"><rect x="4.5" y="2" width="2" height="4"/><rect x="11.5" y="2" width="2" height="4"/><rect x="4.5" y="9" width="2" height="4"/><rect x="11.5" y="9" width="2" height="4"/></g></svg><div class="t" style="left:59.1px;top:407px;font-size:11.8px;line-height:20px;color:#333333;font-weight:normal;">Dashboards</div><svg class="r" style="left:40px;top:433px;" width="17" height="16" viewBox="0 0 17 16"><path d="M0.5 0.5 H16.5 V11.5 H7 L4 15 V11.5 H0.5 Z" fill="#f8f9fb" stroke="#5f7597"/><g stroke="#5f7597"><line x1="3" y1="4" x2="14" y2="4"/><line x1="3" y1="7" x2="14" y2="7"/></g></svg><div class="t" style="left:59.1px;top:431px;font-size:11.8px;line-height:20px;color:#333333;font-weight:normal;">What's New</div><svg class="r" style="left:22px;top:460px;" width="6" height="10" viewBox="0 0 6 10"><path d="M0.5 0.8 L5 5 L0.5 9.2 Z" fill="none" stroke="#8a8a8a" stroke-width="1"/></svg><svg class="r" style="left:31px;top:457px;" width="16" height="14" viewBox="0 0 16 14"><path d="M0 2 H6 L7 0 H15 V13 H0 Z" fill="#f2c98b"/><path d="M0 3 H15 V13 H0 Z" fill="#eec384"/></svg><div class="t" style="left:50.4px;top:455px;font-size:11.8px;line-height:20px;color:#333333;font-weight:normal;">Tools</div><svg class="r" style="left:13px;top:484px;" width="6" height="10" viewBox="0 0 6 10"><path d="M0.5 0.8 L5 5 L0.5 9.2 Z" fill="none" stroke="#8a8a8a" stroke-width="1"/></svg><svg class="r" style="left:24px;top:480px;" width="12" height="18" viewBox="0 0 12 18"><path d="M1 1 L11 6 V11.5 L1 17 Z" fill="#3a8ed8"/><path d="M3 5.5 L9 8.5 L3 13.5 Z" fill="#f6f8fb"/><g fill="#1a1a1a"><rect x="1" y="5" width="1" height="1"/><rect x="10" y="6" width="1" height="1"/><rect x="8" y="7.5" width="1.5" height="1.5"/><rect x="4" y="14" width="1" height="1"/><rect x="1" y="13" width="1" height="1"/></g></svg><div class="t" style="left:41.5px;top:479px;font-size:11.8px;line-height:20px;color:#333333;font-weight:normal;">WSB Settings</div><div class="r" style="left:0px;top:975px;width:231px;height:43px;background:#e6e6e6;border-top:1px solid #d4d4d4;box-sizing:border-box;"></div><div class="r" style="left:42px;top:976px;width:42px;height:42px;background:#dfdfdf;"></div><svg class="r" style="left:13px;top:990px;" width="17" height="13" viewBox="0 0 17 13"><rect x="0" y="0" width="16.5" height="13" fill="#666"/><path d="M0.5 0.5 L8.25 7 L16 0.5" fill="none" stroke="#e6e6e6" stroke-width="1.4"/></svg><svg class="r" style="left:55px;top:990px;" width="16" height="15" viewBox="0 0 16 15"><path d="M8.5 0 L15 3 V11 L8.5 14 L4 12 V3 Z" fill="#1a73d4"/><circle cx="4.5" cy="10.5" r="3.6" fill="#1a73d4" stroke="#dfdfdf" stroke-width="1"/></svg><svg class="r" style="left:98px;top:991px;" width="14" height="13" viewBox="0 0 14 13"><rect x="0" y="0" width="14" height="2.5" fill="#666"/><g fill="#666"><rect x="1" y="4" width="2" height="2"/><rect x="1" y="7" width="2" height="2"/><rect x="1" y="10" width="2" height="2"/><rect x="4" y="4" width="2" height="2"/><rect x="4" y="7" width="2" height="2"/><rect x="4" y="10" width="2" height="2"/><rect x="7" y="4" width="2" height="2"/><rect x="7" y="7" width="2" height="2"/><rect x="7" y="10" width="2" height="2"/><rect x="10" y="4" width="2" height="2"/><rect x="10" y="7" width="2" height="2"/><rect x="10" y="10" width="2" height="2"/><rect x="13" y="4" width="2" height="2"/><rect x="13" y="7" width="2" height="2"/><rect x="13" y="10" width="2" height="2"/></g></svg><svg class="r" style="left:139px;top:990px;" width="16" height="13" viewBox="0 0 16 13"><g fill="#666"><circle cx="4" cy="4.5" r="2.6"/><path d="M0 12.5 A4 3.5 0 0 1 8 12.5 Z"/><circle cx="11.5" cy="2.8" r="2.6"/><path d="M7.5 10.5 A4 3.5 0 0 1 15.5 10.5 Z"/></g></svg><svg class="r" style="left:178px;top:994px;" width="22" height="6" viewBox="0 0 22 6"><g fill="#666"><circle cx="3" cy="3" r="2"/><circle cx="11" cy="3" r="2"/><circle cx="19" cy="3" r="2"/></g></svg><div class="r" style="left:231px;top:152px;width:315px;height:866px;background:#ffffff;"></div><div class="r" style="left:545px;top:160px;width:1px;height:858px;background:#cfcfcf;"></div><svg class="r" style="left:240px;top:155px;" width="304" height="27" viewBox="0 0 304 27"><defs><linearGradient id="tg2" x1="0" y1="0" x2="0" y2="1"><stop offset="0" stop-color="#fafbfd"/><stop offset="1" stop-color="#cdd8e8"/></linearGradient></defs>
<path d="M12 24.5 L22 2.5 Q23 1.5 25 1.5 H188 Q190 1.5 191 3 L200 24.5" fill="#ffffff" stroke="#e2e2e2" stroke-width="1"/>
<path d="M200 24 L192 4 Q191 2 194 2 H239 Q241 2 242 4 L251 24 Z" fill="url(#tg2)"/>
<line x1="0" y1="24.5" x2="300" y2="24.5" stroke="#eaeaea" stroke-width="1"/></svg><svg class="r" style="left:273px;top:165px;" width="12" height="9" viewBox="0 0 12 9"><g fill="#333"><rect x="0" y="3.5" width="5" height="1.6"/><rect x="4" y="0" width="2" height="9"/><rect x="5" y="2" width="5" height="5"/><rect x="9" y="1" width="2" height="7"/></g></svg><div class="t" style="left:295.8px;top:158px;font-size:12.1px;line-height:20px;color:#1a1a1a;font-weight:normal;">Active Applications</div><svg class="r" style="left:448px;top:160px;" width="14" height="14" viewBox="0 0 14 14"><path d="M2 13 V5 L13 13 Z" fill="#f2c462" stroke="#d08a2a" stroke-width="0.8"/><circle cx="3" cy="3" r="2.2" fill="#ffe680"/><g stroke="#f0c000" stroke-width="0.9"><line x1="3" y1="0" x2="3" y2="6"/><line x1="0" y1="3" x2="6" y2="3"/></g></svg><svg class="r" style="left:467px;top:166px;" width="8" height="5" viewBox="0 0 8 5"><path d="M0 0 H8 L4 4.5 Z" fill="#555"/></svg><div class="r" style="left:243px;top:183px;width:272px;height:25px;background:#fff;border:1px solid #8eadd6;box-sizing:border-box;"></div><div class="t" style="left:252.3px;top:186px;font-size:10.55px;line-height:20px;color:#5a5a5a;font-weight:normal;">Search for records</div><svg class="r" style="left:427px;top:186px;" width="14" height="14" viewBox="0 0 14 14"><circle cx="8.5" cy="5.5" r="3.8" fill="none" stroke="#777" stroke-width="1.8"/><line x1="5.8" y1="8.2" x2="1.5" y2="12.5" stroke="#777" stroke-width="2.2"/></svg><div class="r" style="left:446px;top:185px;width:0;height:21px;border-left:1px dotted #7aa0d0;"></div><div class="t" style="left:456.5px;top:186px;font-size:11px;line-height:20px;color:#555;font-weight:normal;">Filter</div><svg class="r" style="left:497px;top:195px;" width="8" height="5" viewBox="0 0 8 5"><path d="M0 0 H7 L3.5 4 Z" fill="#555"/></svg><svg class="r" style="left:522px;top:190px;" width="11" height="12" viewBox="0 0 11 12"><path d="M1 1 L5.5 5.5 L10 1 M1 6 L5.5 10.5 L10 6" fill="none" stroke="#7a9ccc" stroke-width="1.2"/></svg><div class="r" style="left:240px;top:212px;width:276px;height:1px;background:#bdbdbd;"></div><svg class="r" style="left:244px;top:215px;" width="11" height="13" viewBox="0 0 11 13"><path d="M0.5 0.5 H7 L10.5 4 V12.5 H0.5 Z M7 0.5 V4 H10.5" fill="none" stroke="#444" stroke-width="1"/></svg><div class="r" style="left:258px;top:215px;width:1px;height:14px;background:#c8c8c8;"></div><div class="r" style="left:383px;top:215px;width:1px;height:14px;background:#c8c8c8;"></div><div class="r" style="left:483px;top:215px;width:1px;height:14px;background:#c8c8c8;"></div><div class="t" style="left:262.7px;top:212px;font-size:10.6px;line-height:20px;color:#333;font-weight:normal;letter-spacing:-0.38px;">DISPLAY NAME</div><svg class="r" style="left:353px;top:218px;" width="11" height="6" viewBox="0 0 11 6"><path d="M0.5 5.5 H10 L5.25 0.5 Z" fill="#444"/></svg><div class="t" style="left:386.4px;top:212px;font-size:10.6px;line-height:20px;color:#333;font-weight:normal;letter-spacing:-0.3px;">PROGRAM APPLI...</div><div class="t" style="left:487.3px;top:212px;font-size:10.6px;line-height:20px;color:#333;font-weight:normal;letter-spacing:-0.3px;">PLAN</div><svg class="r" style="left:41px;top:361px" width="16" height="17" viewBox="0 0 16 17"><path d="M0.5 0.5 H7.5 L10.5 3.5 V14.5 H0.5 Z" fill="#fff" stroke="#7d8ba0"/><path d="M7.5 0.5 V3.5 H10.5" fill="none" stroke="#3a4a66"/><circle cx="14.00" cy="11.40" r="1.5" fill="#2b4c96"/><circle cx="12.65" cy="14.65" r="1.5" fill="#2b4c96"/><circle cx="9.40" cy="16.00" r="1.5" fill="#2b4c96"/><circle cx="6.15" cy="14.65" r="1.5" fill="#2b4c96"/><circle cx="4.80" cy="11.40" r="1.5" fill="#2b4c96"/><circle cx="6.15" cy="8.15" r="1.5" fill="#2b4c96"/><circle cx="9.40" cy="6.80" r="1.5" fill="#2b4c96"/><circle cx="12.65" cy="8.15" r="1.5" fill="#2b4c96"/><circle cx="9.4" cy="11.4" r="4.3" fill="#7397dc" stroke="#26458e" stroke-width="1"/><rect x="7.6" y="9.6" width="3.6" height="3.6" fill="#f4f6fb" stroke="#2b4c96" stroke-width="0.8"/></svg><div class="r" style="left:240px;top:231px;width:276px;height:738px;overflow:hidden;"><div class="r" style="left:0;top:1px;width:276px;height:18px;background:#cde4f7;border:1px dotted #222;box-sizing:border-box;"></div><svg class="r" style="left:2px;top:1px" width="16" height="17" viewBox="0 0 16 17"><path d="M0.5 0.5 H7.5 L10.5 3.5 V14.5 H0.5 Z" fill="#fff" stroke="#7d8ba0"/><path d="M7.5 0.5 V3.5 H10.5" fill="none" stroke="#3a4a66"/><circle cx="14.00" cy="11.40" r="1.5" fill="#2b4c96"/><circle cx="12.65" cy="14.65" r="1.5" fill="#2b4c96"/><circle cx="9.40" cy="16.00" r="1.5" fill="#2b4c96"/><circle cx="6.15" cy="14.65" r="1.5" fill="#2b4c96"/><circle cx="4.80" cy="11.40" r="1.5" fill="#2b4c96"/><circle cx="6.15" cy="8.15" r="1.5" fill="#2b4c96"/><circle cx="9.40" cy="6.80" r="1.5" fill="#2b4c96"/><circle cx="12.65" cy="8.15" r="1.5" fill="#2b4c96"/><circle cx="9.4" cy="11.4" r="4.3" fill="#7397dc" stroke="#26458e" stroke-width="1"/><rect x="7.6" y="9.6" width="3.6" height="3.6" fill="#f4f6fb" stroke="#2b4c96" stroke-width="0.8"/></svg><div class="t" style="left:20px;top:4.9px;font-size:10.7px;line-height:10.7px;color:#111;">WSBA00000044421</div><div class="t" style="left:147.3px;top:4.7px;font-size:11px;line-height:11px;color:#111;">Full-Time MBA</div><div class="t" style="left:246.4px;top:4.7px;width:30px;overflow:hidden;font-size:11px;line-height:11px;color:#111;">MBA i</div><svg class="r" style="left:2px;top:20px" width="16" height="17" viewBox="0 0 16 17"><path d="M0.5 0.5 H7.5 L10.5 3.5 V14.5 H0.5 Z" fill="#fff" stroke="#7d8ba0"/><path d="M7.5 0.5 V3.5 H10.5" fill="none" stroke="#3a4a66"/><circle cx="14.00" cy="11.40" r="1.5" fill="#2b4c96"/><circle cx="12.65" cy="14.65" r="1.5" fill="#2b4c96"/><circle cx="9.40" cy="16.00" r="1.5" fill="#2b4c96"/><circle cx="6.15" cy="14.65" r="1.5" fill="#2b4c96"/><circle cx="4.80" cy="11.40" r="1.5" fill="#2b4c96"/><circle cx="6.15" cy="8.15" r="1.5" fill="#2b4c96"/><circle cx="9.40" cy="6.80" r="1.5" fill="#2b4c96"/><circle cx="12.65" cy="8.15" r="1.5" fill="#2b4c96"/><circle cx="9.4" cy="11.4" r="4.3" fill="#7397dc" stroke="#26458e" stroke-width="1"/><rect x="7.6" y="9.6" width="3.6" height="3.6" fill="#f4f6fb" stroke="#2b4c96" stroke-width="0.8"/></svg><div class="t" style="left:20px;top:23.9px;font-size:10.7px;line-height:10.7px;color:#111;">WSBA00000044400</div><div class="t" style="left:147.3px;top:23.7px;font-size:11px;line-height:11px;color:#111;">Full-Time MBA</div><div class="t" style="left:246.4px;top:23.7px;width:30px;overflow:hidden;font-size:11px;line-height:11px;color:#111;">MBA i</div><div class="r" style="left:0;top:38px;width:276px;height:1px;background:#e3e3e3;"></div><svg class="r" style="left:2px;top:39px" width="16" height="17" viewBox="0 0 16 17"><path d="M0.5 0.5 H7.5 L10.5 3.5 V14.5 H0.5 Z" fill="#fff" stroke="#7d8ba0"/><path d="M7.5 0.5 V3.5 H10.5" fill="none" stroke="#3a4a66"/><circle cx="14.00" cy="11.40" r="1.5" fill="#2b4c96"/><circle cx="12.65" cy="14.65" r="1.5" fill="#2b4c96"/><circle cx="9.40" cy="16.00" r="1.5" fill="#2b4c96"/><circle cx="6.15" cy="14.65" r="1.5" fill="#2b4c96"/><circle cx="4.80" cy="11.40" r="1.5" fill="#2b4c96"/><circle cx="6.15" cy="8.15" r="1.5" fill="#2b4c96"/><circle cx="9.40" cy="6.80" r="1.5" fill="#2b4c96"/><circle cx="12.65" cy="8.15" r="1.5" fill="#2b4c96"/><circle cx="9.4" cy="11.4" r="4.3" fill="#7397dc" stroke="#26458e" stroke-width="1"/><rect x="7.6" y="9.6" width="3.6" height="3.6" fill="#f4f6fb" stroke="#2b4c96" stroke-width="0.8"/></svg><div class="t" style="left:20px;top:42.9px;font-size:10.7px;line-height:10.7px;color:#111;">WSBA00000044401</div><div class="t" style="left:147.3px;top:42.7px;font-size:11px;line-height:11px;color:#111;">Full-Time MBA</div><div class="t" style="left:246.4px;top:42.7px;width:30px;overflow:hidden;font-size:11px;line-height:11px;color:#111;">MBA i</div><div class="r" style="left:0;top:57px;width:276px;height:1px;background:#e3e3e3;"></div><svg class="r" style="left:2px;top:58px" width="16" height="17" viewBox="0 0 16 17"><path d="M0.5 0.5 H7.5 L10.5 3.5 V14.5 H0.5 Z" fill="#fff" stroke="#7d8ba0"/><path d="M7.5 0.5 V3.5 H10.5" fill="none" stroke="#3a4a66"/><circle cx="14.00" cy="11.40" r="1.5" fill="#2b4c96"/><circle cx="12.65" cy="14.65" r="1.5" fill="#2b4c96"/><circle cx="9.40" cy="16.00" r="1.5" fill="#2b4c96"/><circle cx="6.15" cy="14.65" r="1.5" fill="#2b4c96"/><circle cx="4.80" cy="11.40" r="1.5" fill="#2b4c96"/><circle cx="6.15" cy="8.15" r="1.5" fill="#2b4c96"/><circle cx="9.40" cy="6.80" r="1.5" fill="#2b4c96"/><circle cx="12.65" cy="8.15" r="1.5" fill="#2b4c96"/><circle cx="9.4" cy="11.4" r="4.3" fill="#7397dc" stroke="#26458e" stroke-width="1"/><rect x="7.6" y="9.6" width="3.6" height="3.6" fill="#f4f6fb" stroke="#2b4c96" stroke-width="0.8"/></svg><div class="t" style="left:20px;top:61.9px;font-size:10.7px;line-height:10.7px;color:#111;">WSBA00000044453</div><div class="t" style="left:147.3px;top:61.7px;font-size:11px;line-height:11px;color:#111;">Full-Time MBA</div><div class="t" style="left:246.4px;top:61.7px;width:30px;overflow:hidden;font-size:11px;line-height:11px;color:#111;">MBA i</div><div class="r" style="left:0;top:76px;width:276px;height:1px;background:#e3e3e3;"></div><svg class="r" style="left:2px;top:77px" width="16" height="17" viewBox="0 0 16 17"><path d="M0.5 0.5 H7.5 L10.5 3.5 V14.5 H0.5 Z" fill="#fff" stroke="#7d8ba0"/><path d="M7.5 0.5 V3.5 H10.5" fill="none" stroke="#3a4a66"/><circle cx="14.00" cy="11.40" r="1.5" fill="#2b4c96"/><circle cx="12.65" cy="14.65" r="1.5" fill="#2b4c96"/><circle cx="9.40" cy="16.00" r="1.5" fill="#2b4c96"/><circle cx="6.15" cy="14.65" r="1.5" fill="#2b4c96"/><circle cx="4.80" cy="11.40" r="1.5" fill="#2b4c96"/><circle cx="6.15" cy="8.15" r="1.5" fill="#2b4c96"/><circle cx="9.40" cy="6.80" r="1.5" fill="#2b4c96"/><circle cx="12.65" cy="8.15" r="1.5" fill="#2b4c96"/><circle cx="9.4" cy="11.4" r="4.3" fill="#7397dc" stroke="#26458e" stroke-width="1"/><rect x="7.6" y="9.6" width="3.6" height="3.6" fill="#f4f6fb" stroke="#2b4c96" stroke-width="0.8"/></svg><div class="t" style="left:20px;top:80.9px;font-size:10.7px;line-height:10.7px;color:#111;">WSBA00000044465</div><div class="t" style="left:147.3px;top:80.7px;font-size:11px;line-height:11px;color:#111;">Full-Time MBA</div><div class="t" style="left:246.4px;top:80.7px;width:30px;overflow:hidden;font-size:11px;line-height:11px;color:#111;">MBA i</div><div class="r" style="left:0;top:95px;width:276px;height:1px;background:#e3e3e3;"></div><svg class="r" style="left:2px;top:96px" width="16" height="17" viewBox="0 0 16 17"><path d="M0.5 0.5 H7.5 L10.5 3.5 V14.5 H0.5 Z" fill="#fff" stroke="#7d8ba0"/><path d="M7.5 0.5 V3.5 H10.5" fill="none" stroke="#3a4a66"/><circle cx="14.00" cy="11.40" r="1.5" fill="#2b4c96"/><circle cx="12.65" cy="14.65" r="1.5" fill="#2b4c96"/><circle cx="9.40" cy="16.00" r="1.5" fill="#2b4c96"/><circle cx="6.15" cy="14.65" r="1.5" fill="#2b4c96"/><circle cx="4.80" cy="11.40" r="1.5" fill="#2b4c96"/><circle cx="6.15" cy="8.15" r="1.5" fill="#2b4c96"/><circle cx="9.40" cy="6.80" r="1.5" fill="#2b4c96"/><circle cx="12.65" cy="8.15" r="1.5" fill="#2b4c96"/><circle cx="9.4" cy="11.4" r="4.3" fill="#7397dc" stroke="#26458e" stroke-width="1"/><rect x="7.6" y="9.6" width="3.6" height="3.6" fill="#f4f6fb" stroke="#2b4c96" stroke-width="0.8"/></svg><div class="t" style="left:20px;top:99.9px;font-size:10.7px;line-height:10.7px;color:#111;">WSBA00000045309</div><div class="t" style="left:147.3px;top:99.7px;font-size:11px;line-height:11px;color:#111;">Full-Time MBA</div><div class="t" style="left:246.4px;top:99.7px;width:30px;overflow:hidden;font-size:11px;line-height:11px;color:#111;">MBA i</div><div class="r" style="left:0;top:114px;width:276px;height:1px;background:#e3e3e3;"></div><svg class="r" style="left:2px;top:115px" width="16" height="17" viewBox="0 0 16 17"><path d="M0.5 0.5 H7.5 L10.5 3.5 V14.5 H0.5 Z" fill="#fff" stroke="#7d8ba0"/><path d="M7.5 0.5 V3.5 H10.5" fill="none" stroke="#3a4a66"/><circle cx="14.00" cy="11.40" r="1.5" fill="#2b4c96"/><circle cx="12.65" cy="14.65" r="1.5" fill="#2b4c96"/><circle cx="9.40" cy="16.00" r="1.5" fill="#2b4c96"/><circle cx="6.15" cy="14.65" r="1.5" fill="#2b4c96"/><circle cx="4.80" cy="11.40" r="1.5" fill="#2b4c96"/><circle cx="6.15" cy="8.15" r="1.5" fill="#2b4c96"/><circle cx="9.40" cy="6.80" r="1.5" fill="#2b4c96"/><circle cx="12.65" cy="8.15" r="1.5" fill="#2b4c96"/><circle cx="9.4" cy="11.4" r="4.3" fill="#7397dc" stroke="#26458e" stroke-width="1"/><rect x="7.6" y="9.6" width="3.6" height="3.6" fill="#f4f6fb" stroke="#2b4c96" stroke-width="0.8"/></svg><div class="t" style="left:20px;top:118.9px;font-size:10.7px;line-height:10.7px;color:#111;">WSBA00000044494</div><div class="t" style="left:147.3px;top:118.7px;font-size:11px;line-height:11px;color:#111;">Evening MBA</div><div class="t" style="left:246.4px;top:118.7px;width:30px;overflow:hidden;font-size:11px;line-height:11px;color:#111;">Evenir</div><div class="r" style="left:0;top:133px;width:276px;height:1px;background:#e3e3e3;"></div><svg class="r" style="left:2px;top:134px" width="16" height="17" viewBox="0 0 16 17"><path d="M0.5 0.5 H7.5 L10.5 3.5 V14.5 H0.5 Z" fill="#fff" stroke="#7d8ba0"/><path d="M7.5 0.5 V3.5 H10.5" fill="none" stroke="#3a4a66"/><circle cx="14.00" cy="11.40" r="1.5" fill="#2b4c96"/><circle cx="12.65" cy="14.65" r="1.5" fill="#2b4c96"/><circle cx="9.40" cy="16.00" r="1.5" fill="#2b4c96"/><circle cx="6.15" cy="14.65" r="1.5" fill="#2b4c96"/><circle cx="4.80" cy="11.40" r="1.5" fill="#2b4c96"/><circle cx="6.15" cy="8.15" r="1.5" fill="#2b4c96"/><circle cx="9.40" cy="6.80" r="1.5" fill="#2b4c96"/><circle cx="12.65" cy="8.15" r="1.5" fill="#2b4c96"/><circle cx="9.4" cy="11.4" r="4.3" fill="#7397dc" stroke="#26458e" stroke-width="1"/><rect x="7.6" y="9.6" width="3.6" height="3.6" fill="#f4f6fb" stroke="#2b4c96" stroke-width="0.8"/></svg><div class="t" style="left:20px;top:137.9px;font-size:10.7px;line-height:10.7px;color:#111;">WSBA00000044693</div><div class="t" style="left:147.3px;top:137.7px;font-size:11px;line-height:11px;color:#111;">BBA BEL</div><div class="t" style="left:246.4px;top:137.7px;width:30px;overflow:hidden;font-size:11px;line-height:11px;color:#111;">BBA</div><div class="r" style="left:0;top:152px;width:276px;height:1px;background:#e3e3e3;"></div><svg class="r" style="left:2px;top:153px" width="16" height="17" viewBox="0 0 16 17"><path d="M0.5 0.5 H7.5 L10.5 3.5 V14.5 H0.5 Z" fill="#fff" stroke="#7d8ba0"/><path d="M7.5 0.5 V3.5 H10.5" fill="none" stroke="#3a4a66"/><circle cx="14.00" cy="11.40" r="1.5" fill="#2b4c96"/><circle cx="12.65" cy="14.65" r="1.5" fill="#2b4c96"/><circle cx="9.40" cy="16.00" r="1.5" fill="#2b4c96"/><circle cx="6.15" cy="14.65" r="1.5" fill="#2b4c96"/><circle cx="4.80" cy="11.40" r="1.5" fill="#2b4c96"/><circle cx="6.15" cy="8.15" r="1.5" fill="#2b4c96"/><circle cx="9.40" cy="6.80" r="1.5" fill="#2b4c96"/><circle cx="12.65" cy="8.15" r="1.5" fill="#2b4c96"/><circle cx="9.4" cy="11.4" r="4.3" fill="#7397dc" stroke="#26458e" stroke-width="1"/><rect x="7.6" y="9.6" width="3.6" height="3.6" fill="#f4f6fb" stroke="#2b4c96" stroke-width="0.8"/></svg><div class="t" style="left:20px;top:156.9px;font-size:10.7px;line-height:10.7px;color:#111;">WSBA00000044606</div><div class="t" style="left:147.3px;top:156.7px;font-size:11px;line-height:11px;color:#111;">BBA Pre-Business</div><div class="t" style="left:246.4px;top:156.7px;width:30px;overflow:hidden;font-size:11px;line-height:11px;color:#111;">BBA</div><div class="r" style="left:0;top:171px;width:276px;height:1px;background:#e3e3e3;"></div><svg class="r" style="left:2px;top:172px" width="16" height="17" viewBox="0 0 16 17"><path d="M0.5 0.5 H7.5 L10.5 3.5 V14.5 H0.5 Z" fill="#fff" stroke="#7d8ba0"/><path d="M7.5 0.5 V3.5 H10.5" fill="none" stroke="#3a4a66"/><circle cx="14.00" cy="11.40" r="1.5" fill="#2b4c96"/><circle cx="12.65" cy="14.65" r="1.5" fill="#2b4c96"/><circle cx="9.40" cy="16.00" r="1.5" fill="#2b4c96"/><circle cx="6.15" cy="14.65" r="1.5" fill="#2b4c96"/><circle cx="4.80" cy="11.40" r="1.5" fill="#2b4c96"/><circle cx="6.15" cy="8.15" r="1.5" fill="#2b4c96"/><circle cx="9.40" cy="6.80" r="1.5" fill="#2b4c96"/><circle cx="12.65" cy="8.15" r="1.5" fill="#2b4c96"/><circle cx="9.4" cy="11.4" r="4.3" fill="#7397dc" stroke="#26458e" stroke-width="1"/><rect x="7.6" y="9.6" width="3.6" height="3.6" fill="#f4f6fb" stroke="#2b4c96" stroke-width="0.8"/></svg><div class="t" style="left:20px;top:175.9px;font-size:10.7px;line-height:10.7px;color:#111;">WSBA00000044500</div><div class="t" style="left:147.3px;top:175.7px;font-size:11px;line-height:11px;color:#111;">Full-Time MBA</div><div class="t" style="left:246.4px;top:175.7px;width:30px;overflow:hidden;font-size:11px;line-height:11px;color:#111;">MBA i</div><div class="r" style="left:0;top:190px;width:276px;height:1px;background:#e3e3e3;"></div><svg class="r" style="left:2px;top:191px" width="16" height="17" viewBox="0 0 16 17"><path d="M0.5 0.5 H7.5 L10.5 3.5 V14.5 H0.5 Z" fill="#fff" stroke="#7d8ba0"/><path d="M7.5 0.5 V3.5 H10.5" fill="none" stroke="#3a4a66"/><circle cx="14.00" cy="11.40" r="1.5" fill="#2b4c96"/><circle cx="12.65" cy="14.65" r="1.5" fill="#2b4c96"/><circle cx="9.40" cy="16.00" r="1.5" fill="#2b4c96"/><circle cx="6.15" cy="14.65" r="1.5" fill="#2b4c96"/><circle cx="4.80" cy="11.40" r="1.5" fill="#2b4c96"/><circle cx="6.15" cy="8.15" r="1.5" fill="#2b4c96"/><circle cx="9.40" cy="6.80" r="1.5" fill="#2b4c96"/><circle cx="12.65" cy="8.15" r="1.5" fill="#2b4c96"/><circle cx="9.4" cy="11.4" r="4.3" fill="#7397dc" stroke="#26458e" stroke-width="1"/><rect x="7.6" y="9.6" width="3.6" height="3.6" fill="#f4f6fb" stroke="#2b4c96" stroke-width="0.8"/></svg><div class="t" style="left:20px;top:194.9px;font-size:10.7px;line-height:10.7px;color:#111;">WSBA00000044502</div><div class="t" style="left:147.3px;top:194.7px;font-size:11px;line-height:11px;color:#111;">Corporate Execu...</div><div class="t" style="left:246.4px;top:194.7px;width:30px;overflow:hidden;font-size:11px;line-height:11px;color:#111;">Corpc</div><div class="r" style="left:0;top:209px;width:276px;height:1px;background:#e3e3e3;"></div><svg class="r" style="left:2px;top:210px" width="16" height="17" viewBox="0 0 16 17"><path d="M0.5 0.5 H7.5 L10.5 3.5 V14.5 H0.5 Z" fill="#fff" stroke="#7d8ba0"/><path d="M7.5 0.5 V3.5 H10.5" fill="none" stroke="#3a4a66"/><circle cx="14.00" cy="11.40" r="1.5" fill="#2b4c96"/><circle cx="12.65" cy="14.65" r="1.5" fill="#2b4c96"/><circle cx="9.40" cy="16.00" r="1.5" fill="#2b4c96"/><circle cx="6.15" cy="14.65" r="1.5" fill="#2b4c96"/><circle cx="4.80" cy="11.40" r="1.5" fill="#2b4c96"/><circle cx="6.15" cy="8.15" r="1.5" fill="#2b4c96"/><circle cx="9.40" cy="6.80" r="1.5" fill="#2b4c96"/><circle cx="12.65" cy="8.15" r="1.5" fill="#2b4c96"/><circle cx="9.4" cy="11.4" r="4.3" fill="#7397dc" stroke="#26458e" stroke-width="1"/><rect x="7.6" y="9.6" width="3.6" height="3.6" fill="#f4f6fb" stroke="#2b4c96" stroke-width="0.8"/></svg><div class="t" style="left:20px;top:213.9px;font-size:10.7px;line-height:10.7px;color:#111;">WSBA00000044546</div><div class="t" style="left:147.3px;top:213.7px;font-size:11px;line-height:11px;color:#111;">Corporate Execu...</div><div class="t" style="left:246.4px;top:213.7px;width:30px;overflow:hidden;font-size:11px;line-height:11px;color:#111;">Corpc</div><div class="r" style="left:0;top:228px;width:276px;height:1px;background:#e3e3e3;"></div><svg class="r" style="left:2px;top:229px" width="16" height="17" viewBox="0 0 16 17"><path d="M0.5 0.5 H7.5 L10.5 3.5 V14.5 H0.5 Z" fill="#fff" stroke="#7d8ba0"/><path d="M7.5 0.5 V3.5 H10.5" fill="none" stroke="#3a4a66"/><circle cx="14.00" cy="11.40" r="1.5" fill="#2b4c96"/><circle cx="12.65" cy="14.65" r="1.5" fill="#2b4c96"/><circle cx="9.40" cy="16.00" r="1.5" fill="#2b4c96"/><circle cx="6.15" cy="14.65" r="1.5" fill="#2b4c96"/><circle cx="4.80" cy="11.40" r="1.5" fill="#2b4c96"/><circle cx="6.15" cy="8.15" r="1.5" fill="#2b4c96"/><circle cx="9.40" cy="6.80" r="1.5" fill="#2b4c96"/><circle cx="12.65" cy="8.15" r="1.5" fill="#2b4c96"/><circle cx="9.4" cy="11.4" r="4.3" fill="#7397dc" stroke="#26458e" stroke-width="1"/><rect x="7.6" y="9.6" width="3.6" height="3.6" fill="#f4f6fb" stroke="#2b4c96" stroke-width="0.8"/></svg><div class="t" style="left:20px;top:232.9px;font-size:10.7px;line-height:10.7px;color:#111;">WSBA00000044426</div><div class="t" style="left:147.3px;top:232.7px;font-size:11px;line-height:11px;color:#111;">Full-Time MBA</div><div class="t" style="left:246.4px;top:232.7px;width:30px;overflow:hidden;font-size:11px;line-height:11px;color:#111;">MBA i</div><div class="r" style="left:0;top:247px;width:276px;height:1px;background:#e3e3e3;"></div><svg class="r" style="left:2px;top:248px" width="16" height="17" viewBox="0 0 16 17"><path d="M0.5 0.5 H7.5 L10.5 3.5 V14.5 H0.5 Z" fill="#fff" stroke="#7d8ba0"/><path d="M7.5 0.5 V3.5 H10.5" fill="none" stroke="#3a4a66"/><circle cx="14.00" cy="11.40" r="1.5" fill="#2b4c96"/><circle cx="12.65" cy="14.65" r="1.5" fill="#2b4c96"/><circle cx="9.40" cy="16.00" r="1.5" fill="#2b4c96"/><circle cx="6.15" cy="14.65" r="1.5" fill="#2b4c96"/><circle cx="4.80" cy="11.40" r="1.5" fill="#2b4c96"/><circle cx="6.15" cy="8.15" r="1.5" fill="#2b4c96"/><circle cx="9.40" cy="6.80" r="1.5" fill="#2b4c96"/><circle cx="12.65" cy="8.15" r="1.5" fill="#2b4c96"/><circle cx="9.4" cy="11.4" r="4.3" fill="#7397dc" stroke="#26458e" stroke-width="1"/><rect x="7.6" y="9.6" width="3.6" height="3.6" fill="#f4f6fb" stroke="#2b4c96" stroke-width="0.8"/></svg><div class="t" style="left:20px;top:251.9px;font-size:10.7px;line-height:10.7px;color:#111;">WSBA00000044600</div><div class="t" style="left:147.3px;top:251.7px;font-size:11px;line-height:11px;color:#111;">BBA Pre-Business</div><div class="t" style="left:246.4px;top:251.7px;width:30px;overflow:hidden;font-size:11px;line-height:11px;color:#111;">BBA</div><div class="r" style="left:0;top:266px;width:276px;height:1px;background:#e3e3e3;"></div><svg class="r" style="left:2px;top:267px" width="16" height="17" viewBox="0 0 16 17"><path d="M0.5 0.5 H7.5 L10.5 3.5 V14.5 H0.5 Z" fill="#fff" stroke="#7d8ba0"/><path d="M7.5 0.5 V3.5 H10.5" fill="none" stroke="#3a4a66"/><circle cx="14.00" cy="11.40" r="1.5" fill="#2b4c96"/><circle cx="12.65" cy="14.65" r="1.5" fill="#2b4c96"/><circle cx="9.40" cy="16.00" r="1.5" fill="#2b4c96"/><circle cx="6.15" cy="14.65" r="1.5" fill="#2b4c96"/><circle cx="4.80" cy="11.40" r="1.5" fill="#2b4c96"/><circle cx="6.15" cy="8.15" r="1.5" fill="#2b4c96"/><circle cx="9.40" cy="6.80" r="1.5" fill="#2b4c96"/><circle cx="12.65" cy="8.15" r="1.5" fill="#2b4c96"/><circle cx="9.4" cy="11.4" r="4.3" fill="#7397dc" stroke="#26458e" stroke-width="1"/><rect x="7.6" y="9.6" width="3.6" height="3.6" fill="#f4f6fb" stroke="#2b4c96" stroke-width="0.8"/></svg><div class="t" style="left:20px;top:270.9px;font-size:10.7px;line-height:10.7px;color:#111;">WSBA00000044601</div><div class="t" style="left:147.3px;top:270.7px;font-size:11px;line-height:11px;color:#111;">BBA BEL</div><div class="t" style="left:246.4px;top:270.7px;width:30px;overflow:hidden;font-size:11px;line-height:11px;color:#111;">BBA</div><div class="r" style="left:0;top:285px;width:276px;height:1px;background:#e3e3e3;"></div><svg class="r" style="left:2px;top:286px" width="16" height="17" viewBox="0 0 16 17"><path d="M0.5 0.5 H7.5 L10.5 3.5 V14.5 H0.5 Z" fill="#fff" stroke="#7d8ba0"/><path d="M7.5 0.5 V3.5 H10.5" fill="none" stroke="#3a4a66"/><circle cx="14.00" cy="11.40" r="1.5" fill="#2b4c96"/><circle cx="12.65" cy="14.65" r="1.5" fill="#2b4c96"/><circle cx="9.40" cy="16.00" r="1.5" fill="#2b4c96"/><circle cx="6.15" cy="14.65" r="1.5" fill="#2b4c96"/><circle cx="4.80" cy="11.40" r="1.5" fill="#2b4c96"/><circle cx="6.15" cy="8.15" r="1.5" fill="#2b4c96"/><circle cx="9.40" cy="6.80" r="1.5" fill="#2b4c96"/><circle cx="12.65" cy="8.15" r="1.5" fill="#2b4c96"/><circle cx="9.4" cy="11.4" r="4.3" fill="#7397dc" stroke="#26458e" stroke-width="1"/><rect x="7.6" y="9.6" width="3.6" height="3.6" fill="#f4f6fb" stroke="#2b4c96" stroke-width="0.8"/></svg><div class="t" style="left:20px;top:289.9px;font-size:10.7px;line-height:10.7px;color:#111;">WSBA00000044602</div><div class="t" style="left:147.3px;top:289.7px;font-size:11px;line-height:11px;color:#111;">BBA Direct Admit</div><div class="t" style="left:246.4px;top:289.7px;width:30px;overflow:hidden;font-size:11px;line-height:11px;color:#111;">BBA</div><div class="r" style="left:0;top:304px;width:276px;height:1px;background:#e3e3e3;"></div><svg class="r" style="left:2px;top:305px" width="16" height="17" viewBox="0 0 16 17"><path d="M0.5 0.5 H7.5 L10.5 3.5 V14.5 H0.5 Z" fill="#fff" stroke="#7d8ba0"/><path d="M7.5 0.5 V3.5 H10.5" fill="none" stroke="#3a4a66"/><circle cx="14.00" cy="11.40" r="1.5" fill="#2b4c96"/><circle cx="12.65" cy="14.65" r="1.5" fill="#2b4c96"/><circle cx="9.40" cy="16.00" r="1.5" fill="#2b4c96"/><circle cx="6.15" cy="14.65" r="1.5" fill="#2b4c96"/><circle cx="4.80" cy="11.40" r="1.5" fill="#2b4c96"/><circle cx="6.15" cy="8.15" r="1.5" fill="#2b4c96"/><circle cx="9.40" cy="6.80" r="1.5" fill="#2b4c96"/><circle cx="12.65" cy="8.15" r="1.5" fill="#2b4c96"/><circle cx="9.4" cy="11.4" r="4.3" fill="#7397dc" stroke="#26458e" stroke-width="1"/><rect x="7.6" y="9.6" width="3.6" height="3.6" fill="#f4f6fb" stroke="#2b4c96" stroke-width="0.8"/></svg><div class="t" style="left:20px;top:308.9px;font-size:10.7px;line-height:10.7px;color:#111;">WSBA00000044614</div><div class="t" style="left:147.3px;top:308.7px;font-size:11px;line-height:11px;color:#111;">BBA Pre-Business</div><div class="t" style="left:246.4px;top:308.7px;width:30px;overflow:hidden;font-size:11px;line-height:11px;color:#111;">BBA</div><div class="r" style="left:0;top:323px;width:276px;height:1px;background:#e3e3e3;"></div><svg class="r" style="left:2px;top:324px" width="16" height="17" viewBox="0 0 16 17"><path d="M0.5 0.5 H7.5 L10.5 3.5 V14.5 H0.5 Z" fill="#fff" stroke="#7d8ba0"/><path d="M7.5 0.5 V3.5 H10.5" fill="none" stroke="#3a4a66"/><circle cx="14.00" cy="11.40" r="1.5" fill="#2b4c96"/><circle cx="12.65" cy="14.65" r="1.5" fill="#2b4c96"/><circle cx="9.40" cy="16.00" r="1.5" fill="#2b4c96"/><circle cx="6.15" cy="14.65" r="1.5" fill="#2b4c96"/><circle cx="4.80" cy="11.40" r="1.5" fill="#2b4c96"/><circle cx="6.15" cy="8.15" r="1.5" fill="#2b4c96"/><circle cx="9.40" cy="6.80" r="1.5" fill="#2b4c96"/><circle cx="12.65" cy="8.15" r="1.5" fill="#2b4c96"/><circle cx="9.4" cy="11.4" r="4.3" fill="#7397dc" stroke="#26458e" stroke-width="1"/><rect x="7.6" y="9.6" width="3.6" height="3.6" fill="#f4f6fb" stroke="#2b4c96" stroke-width="0.8"/></svg><div class="t" style="left:20px;top:327.9px;font-size:10.7px;line-height:10.7px;color:#111;">WSBA00000044607</div><div class="t" style="left:147.3px;top:327.7px;font-size:11px;line-height:11px;color:#111;">BBA Pre-Business</div><div class="t" style="left:246.4px;top:327.7px;width:30px;overflow:hidden;font-size:11px;line-height:11px;color:#111;">BBA: /</div><div class="r" style="left:0;top:342px;width:276px;height:1px;background:#e3e3e3;"></div><svg class="r" style="left:2px;top:343px" width="16" height="17" viewBox="0 0 16 17"><path d="M0.5 0.5 H7.5 L10.5 3.5 V14.5 H0.5 Z" fill="#fff" stroke="#7d8ba0"/><path d="M7.5 0.5 V3.5 H10.5" fill="none" stroke="#3a4a66"/><circle cx="14.00" cy="11.40" r="1.5" fill="#2b4c96"/><circle cx="12.65" cy="14.65" r="1.5" fill="#2b4c96"/><circle cx="9.40" cy="16.00" r="1.5" fill="#2b4c96"/><circle cx="6.15" cy="14.65" r="1.5" fill="#2b4c96"/><circle cx="4.80" cy="11.40" r="1.5" fill="#2b4c96"/><circle cx="6.15" cy="8.15" r="1.5" fill="#2b4c96"/><circle cx="9.40" cy="6.80" r="1.5" fill="#2b4c96"/><circle cx="12.65" cy="8.15" r="1.5" fill="#2b4c96"/><circle cx="9.4" cy="11.4" r="4.3" fill="#7397dc" stroke="#26458e" stroke-width="1"/><rect x="7.6" y="9.6" width="3.6" height="3.6" fill="#f4f6fb" stroke="#2b4c96" stroke-width="0.8"/></svg><div class="t" style="left:20px;top:346.9px;font-size:10.7px;line-height:10.7px;color:#111;">WSBA00000044486</div><div class="t" style="left:147.3px;top:346.7px;font-size:11px;line-height:11px;color:#111;">Full-Time MBA</div><div class="t" style="left:246.4px;top:346.7px;width:30px;overflow:hidden;font-size:11px;line-height:11px;color:#111;">MBA i</div><div class="r" style="left:0;top:361px;width:276px;height:1px;background:#e3e3e3;"></div><svg class="r" style="left:2px;top:362px" width="16" height="17" viewBox="0 0 16 17"><path d="M0.5 0.5 H7.5 L10.5 3.5 V14.5 H0.5 Z" fill="#fff" stroke="#7d8ba0"/><path d="M7.5 0.5 V3.5 H10.5" fill="none" stroke="#3a4a66"/><circle cx="14.00" cy="11.40" r="1.5" fill="#2b4c96"/><circle cx="12.65" cy="14.65" r="1.5" fill="#2b4c96"/><circle cx="9.40" cy="16.00" r="1.5" fill="#2b4c96"/><circle cx="6.15" cy="14.65" r="1.5" fill="#2b4c96"/><circle cx="4.80" cy="11.40" r="1.5" fill="#2b4c96"/><circle cx="6.15" cy="8.15" r="1.5" fill="#2b4c96"/><circle cx="9.40" cy="6.80" r="1.5" fill="#2b4c96"/><circle cx="12.65" cy="8.15" r="1.5" fill="#2b4c96"/><circle cx="9.4" cy="11.4" r="4.3" fill="#7397dc" stroke="#26458e" stroke-width="1"/><rect x="7.6" y="9.6" width="3.6" height="3.6" fill="#f4f6fb" stroke="#2b4c96" stroke-width="0.8"/></svg><div class="t" style="left:20px;top:365.9px;font-size:10.7px;line-height:10.7px;color:#111;">WSBA00000044487</div><div class="t" style="left:147.3px;top:365.7px;font-size:11px;line-height:11px;color:#111;">Evening MBA</div><div class="t" style="left:246.4px;top:365.7px;width:30px;overflow:hidden;font-size:11px;line-height:11px;color:#111;">Evenir</div><div class="r" style="left:0;top:380px;width:276px;height:1px;background:#e3e3e3;"></div><svg class="r" style="left:2px;top:381px" width="16" height="17" viewBox="0 0 16 17"><path d="M0.5 0.5 H7.5 L10.5 3.5 V14.5 H0.5 Z" fill="#fff" stroke="#7d8ba0"/><path d="M7.5 0.5 V3.5 H10.5" fill="none" stroke="#3a4a66"/><circle cx="14.00" cy="11.40" r="1.5" fill="#2b4c96"/><circle cx="12.65" cy="14.65" r="1.5" fill="#2b4c96"/><circle cx="9.40" cy="16.00" r="1.5" fill="#2b4c96"/><circle cx="6.15" cy="14.65" r="1.5" fill="#2b4c96"/><circle cx="4.80" cy="11.40" r="1.5" fill="#2b4c96"/><circle cx="6.15" cy="8.15" r="1.5" fill="#2b4c96"/><circle cx="9.40" cy="6.80" r="1.5" fill="#2b4c96"/><circle cx="12.65" cy="8.15" r="1.5" fill="#2b4c96"/><circle cx="9.4" cy="11.4" r="4.3" fill="#7397dc" stroke="#26458e" stroke-width="1"/><rect x="7.6" y="9.6" width="3.6" height="3.6" fill="#f4f6fb" stroke="#2b4c96" stroke-width="0.8"/></svg><div class="t" style="left:20px;top:384.9px;font-size:10.7px;line-height:10.7px;color:#111;">WSBA00000044488</div><div class="t" style="left:147.3px;top:384.7px;font-size:11px;line-height:11px;color:#111;">BBA BEL</div><div class="t" style="left:246.4px;top:384.7px;width:30px;overflow:hidden;font-size:11px;line-height:11px;color:#111;">BBA</div><div class="r" style="left:0;top:399px;width:276px;height:1px;background:#e3e3e3;"></div><svg class="r" style="left:2px;top:400px" width="16" height="17" viewBox="0 0 16 17"><path d="M0.5 0.5 H7.5 L10.5 3.5 V14.5 H0.5 Z" fill="#fff" stroke="#7d8ba0"/><path d="M7.5 0.5 V3.5 H10.5" fill="none" stroke="#3a4a66"/><circle cx="14.00" cy="11.40" r="1.5" fill="#2b4c96"/><circle cx="12.65" cy="14.65" r="1.5" fill="#2b4c96"/><circle cx="9.40" cy="16.00" r="1.5" fill="#2b4c96"/><circle cx="6.15" cy="14.65" r="1.5" fill="#2b4c96"/><circle cx="4.80" cy="11.40" r="1.5" fill="#2b4c96"/><circle cx="6.15" cy="8.15" r="1.5" fill="#2b4c96"/><circle cx="9.40" cy="6.80" r="1.5" fill="#2b4c96"/><circle cx="12.65" cy="8.15" r="1.5" fill="#2b4c96"/><circle cx="9.4" cy="11.4" r="4.3" fill="#7397dc" stroke="#26458e" stroke-width="1"/><rect x="7.6" y="9.6" width="3.6" height="3.6" fill="#f4f6fb" stroke="#2b4c96" stroke-width="0.8"/></svg><div class="t" style="left:20px;top:403.9px;font-size:10.7px;line-height:10.7px;color:#111;">WSBA00000044491</div><div class="t" style="left:147.3px;top:403.7px;font-size:11px;line-height:11px;color:#111;">Full-Time MBA</div><div class="t" style="left:246.4px;top:403.7px;width:30px;overflow:hidden;font-size:11px;line-height:11px;color:#111;">MBA i</div><div class="r" style="left:0;top:418px;width:276px;height:1px;background:#e3e3e3;"></div><svg class="r" style="left:2px;top:419px" width="16" height="17" viewBox="0 0 16 17"><path d="M0.5 0.5 H7.5 L10.5 3.5 V14.5 H0.5 Z" fill="#fff" stroke="#7d8ba0"/><path d="M7.5 0.5 V3.5 H10.5" fill="none" stroke="#3a4a66"/><circle cx="14.00" cy="11.40" r="1.5" fill="#2b4c96"/><circle cx="12.65" cy="14.65" r="1.5" fill="#2b4c96"/><circle cx="9.40" cy="16.00" r="1.5" fill="#2b4c96"/><circle cx="6.15" cy="14.65" r="1.5" fill="#2b4c96"/><circle cx="4.80" cy="11.40" r="1.5" fill="#2b4c96"/><circle cx="6.15" cy="8.15" r="1.5" fill="#2b4c96"/><circle cx="9.40" cy="6.80" r="1.5" fill="#2b4c96"/><circle cx="12.65" cy="8.15" r="1.5" fill="#2b4c96"/><circle cx="9.4" cy="11.4" r="4.3" fill="#7397dc" stroke="#26458e" stroke-width="1"/><rect x="7.6" y="9.6" width="3.6" height="3.6" fill="#f4f6fb" stroke="#2b4c96" stroke-width="0.8"/></svg><div class="t" style="left:20px;top:422.9px;font-size:10.7px;line-height:10.7px;color:#111;">WSBA00000044492</div><div class="t" style="left:147.3px;top:422.7px;font-size:11px;line-height:11px;color:#111;">Evening MBA</div><div class="t" style="left:246.4px;top:422.7px;width:30px;overflow:hidden;font-size:11px;line-height:11px;color:#111;">Evenir</div><div class="r" style="left:0;top:437px;width:276px;height:1px;background:#e3e3e3;"></div><svg class="r" style="left:2px;top:438px" width="16" height="17" viewBox="0 0 16 17"><path d="M0.5 0.5 H7.5 L10.5 3.5 V14.5 H0.5 Z" fill="#fff" stroke="#7d8ba0"/><path d="M7.5 0.5 V3.5 H10.5" fill="none" stroke="#3a4a66"/><circle cx="14.00" cy="11.40" r="1.5" fill="#2b4c96"/><circle cx="12.65" cy="14.65" r="1.5" fill="#2b4c96"/><circle cx="9.40" cy="16.00" r="1.5" fill="#2b4c96"/><circle cx="6.15" cy="14.65" r="1.5" fill="#2b4c96"/><circle cx="4.80" cy="11.40" r="1.5" fill="#2b4c96"/><circle cx="6.15" cy="8.15" r="1.5" fill="#2b4c96"/><circle cx="9.40" cy="6.80" r="1.5" fill="#2b4c96"/><circle cx="12.65" cy="8.15" r="1.5" fill="#2b4c96"/><circle cx="9.4" cy="11.4" r="4.3" fill="#7397dc" stroke="#26458e" stroke-width="1"/><rect x="7.6" y="9.6" width="3.6" height="3.6" fill="#f4f6fb" stroke="#2b4c96" stroke-width="0.8"/></svg><div class="t" style="left:20px;top:441.9px;font-size:10.7px;line-height:10.7px;color:#111;">WSBA00000044493</div><div class="t" style="left:147.3px;top:441.7px;font-size:11px;line-height:11px;color:#111;">Full-Time MBA</div><div class="t" style="left:246.4px;top:441.7px;width:30px;overflow:hidden;font-size:11px;line-height:11px;color:#111;">MBA i</div><div class="r" style="left:0;top:456px;width:276px;height:1px;background:#e3e3e3;"></div><svg class="r" style="left:2px;top:457px" width="16" height="17" viewBox="0 0 16 17"><path d="M0.5 0.5 H7.5 L10.5 3.5 V14.5 H0.5 Z" fill="#fff" stroke="#7d8ba0"/><path d="M7.5 0.5 V3.5 H10.5" fill="none" stroke="#3a4a66"/><circle cx="14.00" cy="11.40" r="1.5" fill="#2b4c96"/><circle cx="12.65" cy="14.65" r="1.5" fill="#2b4c96"/><circle cx="9.40" cy="16.00" r="1.5" fill="#2b4c96"/><circle cx="6.15" cy="14.65" r="1.5" fill="#2b4c96"/><circle cx="4.80" cy="11.40" r="1.5" fill="#2b4c96"/><circle cx="6.15" cy="8.15" r="1.5" fill="#2b4c96"/><circle cx="9.40" cy="6.80" r="1.5" fill="#2b4c96"/><circle cx="12.65" cy="8.15" r="1.5" fill="#2b4c96"/><circle cx="9.4" cy="11.4" r="4.3" fill="#7397dc" stroke="#26458e" stroke-width="1"/><rect x="7.6" y="9.6" width="3.6" height="3.6" fill="#f4f6fb" stroke="#2b4c96" stroke-width="0.8"/></svg><div class="t" style="left:20px;top:460.9px;font-size:10.7px;line-height:10.7px;color:#111;">WSBA00000044506</div><div class="t" style="left:147.3px;top:460.7px;font-size:11px;line-height:11px;color:#111;">Full-Time MBA</div><div class="t" style="left:246.4px;top:460.7px;width:30px;overflow:hidden;font-size:11px;line-height:11px;color:#111;">MBA i</div><div class="r" style="left:0;top:475px;width:276px;height:1px;background:#e3e3e3;"></div><svg class="r" style="left:2px;top:476px" width="16" height="17" viewBox="0 0 16 17"><path d="M0.5 0.5 H7.5 L10.5 3.5 V14.5 H0.5 Z" fill="#fff" stroke="#7d8ba0"/><path d="M7.5 0.5 V3.5 H10.5" fill="none" stroke="#3a4a66"/><circle cx="14.00" cy="11.40" r="1.5" fill="#2b4c96"/><circle cx="12.65" cy="14.65" r="1.5" fill="#2b4c96"/><circle cx="9.40" cy="16.00" r="1.5" fill="#2b4c96"/><circle cx="6.15" cy="14.65" r="1.5" fill="#2b4c96"/><circle cx="4.80" cy="11.40" r="1.5" fill="#2b4c96"/><circle cx="6.15" cy="8.15" r="1.5" fill="#2b4c96"/><circle cx="9.40" cy="6.80" r="1.5" fill="#2b4c96"/><circle cx="12.65" cy="8.15" r="1.5" fill="#2b4c96"/><circle cx="9.4" cy="11.4" r="4.3" fill="#7397dc" stroke="#26458e" stroke-width="1"/><rect x="7.6" y="9.6" width="3.6" height="3.6" fill="#f4f6fb" stroke="#2b4c96" stroke-width="0.8"/></svg><div class="t" style="left:20px;top:479.9px;font-size:10.7px;line-height:10.7px;color:#111;">WSBA00000045305</div><div class="t" style="left:147.3px;top:479.7px;font-size:11px;line-height:11px;color:#111;">Full-Time MBA</div><div class="t" style="left:246.4px;top:479.7px;width:30px;overflow:hidden;font-size:11px;line-height:11px;color:#111;">MBA i</div><div class="r" style="left:0;top:494px;width:276px;height:1px;background:#e3e3e3;"></div><svg class="r" style="left:2px;top:495px" width="16" height="17" viewBox="0 0 16 17"><path d="M0.5 0.5 H7.5 L10.5 3.5 V14.5 H0.5 Z" fill="#fff" stroke="#7d8ba0"/><path d="M7.5 0.5 V3.5 H10.5" fill="none" stroke="#3a4a66"/><circle cx="14.00" cy="11.40" r="1.5" fill="#2b4c96"/><circle cx="12.65" cy="14.65" r="1.5" fill="#2b4c96"/><circle cx="9.40" cy="16.00" r="1.5" fill="#2b4c96"/><circle cx="6.15" cy="14.65" r="1.5" fill="#2b4c96"/><circle cx="4.80" cy="11.40" r="1.5" fill="#2b4c96"/><circle cx="6.15" cy="8.15" r="1.5" fill="#2b4c96"/><circle cx="9.40" cy="6.80" r="1.5" fill="#2b4c96"/><circle cx="12.65" cy="8.15" r="1.5" fill="#2b4c96"/><circle cx="9.4" cy="11.4" r="4.3" fill="#7397dc" stroke="#26458e" stroke-width="1"/><rect x="7.6" y="9.6" width="3.6" height="3.6" fill="#f4f6fb" stroke="#2b4c96" stroke-width="0.8"/></svg><div class="t" style="left:20px;top:498.9px;font-size:10.7px;line-height:10.7px;color:#111;">WSBA00000044473</div><div class="t" style="left:147.3px;top:498.7px;font-size:11px;line-height:11px;color:#111;">Full-Time MBA</div><div class="t" style="left:246.4px;top:498.7px;width:30px;overflow:hidden;font-size:11px;line-height:11px;color:#111;">MBA i</div><div class="r" style="left:0;top:513px;width:276px;height:1px;background:#e3e3e3;"></div><svg class="r" style="left:2px;top:514px" width="16" height="17" viewBox="0 0 16 17"><path d="M0.5 0.5 H7.5 L10.5 3.5 V14.5 H0.5 Z" fill="#fff" stroke="#7d8ba0"/><path d="M7.5 0.5 V3.5 H10.5" fill="none" stroke="#3a4a66"/><circle cx="14.00" cy="11.40" r="1.5" fill="#2b4c96"/><circle cx="12.65" cy="14.65" r="1.5" fill="#2b4c96"/><circle cx="9.40" cy="16.00" r="1.5" fill="#2b4c96"/><circle cx="6.15" cy="14.65" r="1.5" fill="#2b4c96"/><circle cx="4.80" cy="11.40" r="1.5" fill="#2b4c96"/><circle cx="6.15" cy="8.15" r="1.5" fill="#2b4c96"/><circle cx="9.40" cy="6.80" r="1.5" fill="#2b4c96"/><circle cx="12.65" cy="8.15" r="1.5" fill="#2b4c96"/><circle cx="9.4" cy="11.4" r="4.3" fill="#7397dc" stroke="#26458e" stroke-width="1"/><rect x="7.6" y="9.6" width="3.6" height="3.6" fill="#f4f6fb" stroke="#2b4c96" stroke-width="0.8"/></svg><div class="t" style="left:20px;top:517.9px;font-size:10.7px;line-height:10.7px;color:#111;">WSBA00000044584</div><div class="t" style="left:147.3px;top:517.7px;font-size:11px;line-height:11px;color:#111;">Full-Time MBA</div><div class="t" style="left:246.4px;top:517.7px;width:30px;overflow:hidden;font-size:11px;line-height:11px;color:#111;">MBA i</div><div class="r" style="left:0;top:532px;width:276px;height:1px;background:#e3e3e3;"></div><svg class="r" style="left:2px;top:533px" width="16" height="17" viewBox="0 0 16 17"><path d="M0.5 0.5 H7.5 L10.5 3.5 V14.5 H0.5 Z" fill="#fff" stroke="#7d8ba0"/><path d="M7.5 0.5 V3.5 H10.5" fill="none" stroke="#3a4a66"/><circle cx="14.00" cy="11.40" r="1.5" fill="#2b4c96"/><circle cx="12.65" cy="14.65" r="1.5" fill="#2b4c96"/><circle cx="9.40" cy="16.00" r="1.5" fill="#2b4c96"/><circle cx="6.15" cy="14.65" r="1.5" fill="#2b4c96"/><circle cx="4.80" cy="11.40" r="1.5" fill="#2b4c96"/><circle cx="6.15" cy="8.15" r="1.5" fill="#2b4c96"/><circle cx="9.40" cy="6.80" r="1.5" fill="#2b4c96"/><circle cx="12.65" cy="8.15" r="1.5" fill="#2b4c96"/><circle cx="9.4" cy="11.4" r="4.3" fill="#7397dc" stroke="#26458e" stroke-width="1"/><rect x="7.6" y="9.6" width="3.6" height="3.6" fill="#f4f6fb" stroke="#2b4c96" stroke-width="0.8"/></svg><div class="t" style="left:20px;top:536.9px;font-size:10.7px;line-height:10.7px;color:#111;">WSBA00000045304</div><div class="t" style="left:147.3px;top:536.7px;font-size:11px;line-height:11px;color:#111;">Full-Time MBA</div><div class="t" style="left:246.4px;top:536.7px;width:30px;overflow:hidden;font-size:11px;line-height:11px;color:#111;">MBA i</div><div class="r" style="left:0;top:551px;width:276px;height:1px;background:#e3e3e3;"></div><svg class="r" style="left:2px;top:552px" width="16" height="17" viewBox="0 0 16 17"><path d="M0.5 0.5 H7.5 L10.5 3.5 V14.5 H0.5 Z" fill="#fff" stroke="#7d8ba0"/><path d="M7.5 0.5 V3.5 H10.5" fill="none" stroke="#3a4a66"/><circle cx="14.00" cy="11.40" r="1.5" fill="#2b4c96"/><circle cx="12.65" cy="14.65" r="1.5" fill="#2b4c96"/><circle cx="9.40" cy="16.00" r="1.5" fill="#2b4c96"/><circle cx="6.15" cy="14.65" r="1.5" fill="#2b4c96"/><circle cx="4.80" cy="11.40" r="1.5" fill="#2b4c96"/><circle cx="6.15" cy="8.15" r="1.5" fill="#2b4c96"/><circle cx="9.40" cy="6.80" r="1.5" fill="#2b4c96"/><circle cx="12.65" cy="8.15" r="1.5" fill="#2b4c96"/><circle cx="9.4" cy="11.4" r="4.3" fill="#7397dc" stroke="#26458e" stroke-width="1"/><rect x="7.6" y="9.6" width="3.6" height="3.6" fill="#f4f6fb" stroke="#2b4c96" stroke-width="0.8"/></svg><div class="t" style="left:20px;top:555.9px;font-size:10.7px;line-height:10.7px;color:#111;">WSBA00000055901</div><div class="t" style="left:147.3px;top:555.7px;font-size:11px;line-height:11px;color:#111;">BBA Pre-Business</div><div class="t" style="left:246.4px;top:555.7px;width:30px;overflow:hidden;font-size:11px;line-height:11px;color:#111;">BBA</div><div class="r" style="left:0;top:570px;width:276px;height:1px;background:#e3e3e3;"></div><svg class="r" style="left:2px;top:571px" width="16" height="17" viewBox="0 0 16 17"><path d="M0.5 0.5 H7.5 L10.5 3.5 V14.5 H0.5 Z" fill="#fff" stroke="#7d8ba0"/><path d="M7.5 0.5 V3.5 H10.5" fill="none" stroke="#3a4a66"/><circle cx="14.00" cy="11.40" r="1.5" fill="#2b4c96"/><circle cx="12.65" cy="14.65" r="1.5" fill="#2b4c96"/><circle cx="9.40" cy="16.00" r="1.5" fill="#2b4c96"/><circle cx="6.15" cy="14.65" r="1.5" fill="#2b4c96"/><circle cx="4.80" cy="11.40" r="1.5" fill="#2b4c96"/><circle cx="6.15" cy="8.15" r="1.5" fill="#2b4c96"/><circle cx="9.40" cy="6.80" r="1.5" fill="#2b4c96"/><circle cx="12.65" cy="8.15" r="1.5" fill="#2b4c96"/><circle cx="9.4" cy="11.4" r="4.3" fill="#7397dc" stroke="#26458e" stroke-width="1"/><rect x="7.6" y="9.6" width="3.6" height="3.6" fill="#f4f6fb" stroke="#2b4c96" stroke-width="0.8"/></svg><div class="t" style="left:20px;top:574.9px;font-size:10.7px;line-height:10.7px;color:#111;">WSBA00000055903</div><div class="t" style="left:147.3px;top:574.7px;font-size:11px;line-height:11px;color:#111;">BBA Pre-Business</div><div class="t" style="left:246.4px;top:574.7px;width:30px;overflow:hidden;font-size:11px;line-height:11px;color:#111;">BBA</div><div class="r" style="left:0;top:589px;width:276px;height:1px;background:#e3e3e3;"></div><svg class="r" style="left:2px;top:590px" width="16" height="17" viewBox="0 0 16 17"><path d="M0.5 0.5 H7.5 L10.5 3.5 V14.5 H0.5 Z" fill="#fff" stroke="#7d8ba0"/><path d="M7.5 0.5 V3.5 H10.5" fill="none" stroke="#3a4a66"/><circle cx="14.00" cy="11.40" r="1.5" fill="#2b4c96"/><circle cx="12.65" cy="14.65" r="1.5" fill="#2b4c96"/><circle cx="9.40" cy="16.00" r="1.5" fill="#2b4c96"/><circle cx="6.15" cy="14.65" r="1.5" fill="#2b4c96"/><circle cx="4.80" cy="11.40" r="1.5" fill="#2b4c96"/><circle cx="6.15" cy="8.15" r="1.5" fill="#2b4c96"/><circle cx="9.40" cy="6.80" r="1.5" fill="#2b4c96"/><circle cx="12.65" cy="8.15" r="1.5" fill="#2b4c96"/><circle cx="9.4" cy="11.4" r="4.3" fill="#7397dc" stroke="#26458e" stroke-width="1"/><rect x="7.6" y="9.6" width="3.6" height="3.6" fill="#f4f6fb" stroke="#2b4c96" stroke-width="0.8"/></svg><div class="t" style="left:20px;top:593.9px;font-size:10.7px;line-height:10.7px;color:#111;">WSBA00000045092</div><div class="t" style="left:147.3px;top:593.7px;font-size:11px;line-height:11px;color:#111;">Full-Time MBA</div><div class="t" style="left:246.4px;top:593.7px;width:30px;overflow:hidden;font-size:11px;line-height:11px;color:#111;">MBA i</div><div class="r" style="left:0;top:608px;width:276px;height:1px;background:#e3e3e3;"></div><svg class="r" style="left:2px;top:609px" width="16" height="17" viewBox="0 0 16 17"><path d="M0.5 0.5 H7.5 L10.5 3.5 V14.5 H0.5 Z" fill="#fff" stroke="#7d8ba0"/><path d="M7.5 0.5 V3.5 H10.5" fill="none" stroke="#3a4a66"/><circle cx="14.00" cy="11.40" r="1.5" fill="#2b4c96"/><circle cx="12.65" cy="14.65" r="1.5" fill="#2b4c96"/><circle cx="9.40" cy="16.00" r="1.5" fill="#2b4c96"/><circle cx="6.15" cy="14.65" r="1.5" fill="#2b4c96"/><circle cx="4.80" cy="11.40" r="1.5" fill="#2b4c96"/><circle cx="6.15" cy="8.15" r="1.5" fill="#2b4c96"/><circle cx="9.40" cy="6.80" r="1.5" fill="#2b4c96"/><circle cx="12.65" cy="8.15" r="1.5" fill="#2b4c96"/><circle cx="9.4" cy="11.4" r="4.3" fill="#7397dc" stroke="#26458e" stroke-width="1"/><rect x="7.6" y="9.6" width="3.6" height="3.6" fill="#f4f6fb" stroke="#2b4c96" stroke-width="0.8"/></svg><div class="t" style="left:20px;top:612.9px;font-size:10.7px;line-height:10.7px;color:#111;">WSBA00000044468</div><div class="t" style="left:147.3px;top:612.7px;font-size:11px;line-height:11px;color:#111;">Full-Time MBA</div><div class="t" style="left:246.4px;top:612.7px;width:30px;overflow:hidden;font-size:11px;line-height:11px;color:#111;">MBA i</div><div class="r" style="left:0;top:627px;width:276px;height:1px;background:#e3e3e3;"></div><svg class="r" style="left:2px;top:628px" width="16" height="17" viewBox="0 0 16 17"><path d="M0.5 0.5 H7.5 L10.5 3.5 V14.5 H0.5 Z" fill="#fff" stroke="#7d8ba0"/><path d="M7.5 0.5 V3.5 H10.5" fill="none" stroke="#3a4a66"/><circle cx="14.00" cy="11.40" r="1.5" fill="#2b4c96"/><circle cx="12.65" cy="14.65" r="1.5" fill="#2b4c96"/><circle cx="9.40" cy="16.00" r="1.5" fill="#2b4c96"/><circle cx="6.15" cy="14.65" r="1.5" fill="#2b4c96"/><circle cx="4.80" cy="11.40" r="1.5" fill="#2b4c96"/><circle cx="6.15" cy="8.15" r="1.5" fill="#2b4c96"/><circle cx="9.40" cy="6.80" r="1.5" fill="#2b4c96"/><circle cx="12.65" cy="8.15" r="1.5" fill="#2b4c96"/><circle cx="9.4" cy="11.4" r="4.3" fill="#7397dc" stroke="#26458e" stroke-width="1"/><rect x="7.6" y="9.6" width="3.6" height="3.6" fill="#f4f6fb" stroke="#2b4c96" stroke-width="0.8"/></svg><div class="t" style="left:20px;top:631.9px;font-size:10.7px;line-height:10.7px;color:#111;">WSBA00000044566</div><div class="t" style="left:147.3px;top:631.7px;font-size:11px;line-height:11px;color:#111;">Full-Time MBA</div><div class="t" style="left:246.4px;top:631.7px;width:30px;overflow:hidden;font-size:11px;line-height:11px;color:#111;">MBA i</div><div class="r" style="left:0;top:646px;width:276px;height:1px;background:#e3e3e3;"></div><svg class="r" style="left:2px;top:647px" width="16" height="17" viewBox="0 0 16 17"><path d="M0.5 0.5 H7.5 L10.5 3.5 V14.5 H0.5 Z" fill="#fff" stroke="#7d8ba0"/><path d="M7.5 0.5 V3.5 H10.5" fill="none" stroke="#3a4a66"/><circle cx="14.00" cy="11.40" r="1.5" fill="#2b4c96"/><circle cx="12.65" cy="14.65" r="1.5" fill="#2b4c96"/><circle cx="9.40" cy="16.00" r="1.5" fill="#2b4c96"/><circle cx="6.15" cy="14.65" r="1.5" fill="#2b4c96"/><circle cx="4.80" cy="11.40" r="1.5" fill="#2b4c96"/><circle cx="6.15" cy="8.15" r="1.5" fill="#2b4c96"/><circle cx="9.40" cy="6.80" r="1.5" fill="#2b4c96"/><circle cx="12.65" cy="8.15" r="1.5" fill="#2b4c96"/><circle cx="9.4" cy="11.4" r="4.3" fill="#7397dc" stroke="#26458e" stroke-width="1"/><rect x="7.6" y="9.6" width="3.6" height="3.6" fill="#f4f6fb" stroke="#2b4c96" stroke-width="0.8"/></svg><div class="t" style="left:20px;top:650.9px;font-size:10.7px;line-height:10.7px;color:#111;">WSBA00000044569</div><div class="t" style="left:147.3px;top:650.7px;font-size:11px;line-height:11px;color:#111;">Doctoral Program</div><div class="t" style="left:246.4px;top:650.7px;width:30px;overflow:hidden;font-size:11px;line-height:11px;color:#111;">PhD: F</div><div class="r" style="left:0;top:665px;width:276px;height:1px;background:#e3e3e3;"></div><svg class="r" style="left:2px;top:666px" width="16" height="17" viewBox="0 0 16 17"><path d="M0.5 0.5 H7.5 L10.5 3.5 V14.5 H0.5 Z" fill="#fff" stroke="#7d8ba0"/><path d="M7.5 0.5 V3.5 H10.5" fill="none" stroke="#3a4a66"/><circle cx="14.00" cy="11.40" r="1.5" fill="#2b4c96"/><circle cx="12.65" cy="14.65" r="1.5" fill="#2b4c96"/><circle cx="9.40" cy="16.00" r="1.5" fill="#2b4c96"/><circle cx="6.15" cy="14.65" r="1.5" fill="#2b4c96"/><circle cx="4.80" cy="11.40" r="1.5" fill="#2b4c96"/><circle cx="6.15" cy="8.15" r="1.5" fill="#2b4c96"/><circle cx="9.40" cy="6.80" r="1.5" fill="#2b4c96"/><circle cx="12.65" cy="8.15" r="1.5" fill="#2b4c96"/><circle cx="9.4" cy="11.4" r="4.3" fill="#7397dc" stroke="#26458e" stroke-width="1"/><rect x="7.6" y="9.6" width="3.6" height="3.6" fill="#f4f6fb" stroke="#2b4c96" stroke-width="0.8"/></svg><div class="t" style="left:20px;top:669.9px;font-size:10.7px;line-height:10.7px;color:#111;">WSBA00000044583</div><div class="t" style="left:147.3px;top:669.7px;font-size:11px;line-height:11px;color:#111;">Full-Time MBA</div><div class="t" style="left:246.4px;top:669.7px;width:30px;overflow:hidden;font-size:11px;line-height:11px;color:#111;">MBA i</div><div class="r" style="left:0;top:684px;width:276px;height:1px;background:#e3e3e3;"></div><svg class="r" style="left:2px;top:685px" width="16" height="17" viewBox="0 0 16 17"><path d="M0.5 0.5 H7.5 L10.5 3.5 V14.5 H0.5 Z" fill="#fff" stroke="#7d8ba0"/><path d="M7.5 0.5 V3.5 H10.5" fill="none" stroke="#3a4a66"/><circle cx="14.00" cy="11.40" r="1.5" fill="#2b4c96"/><circle cx="12.65" cy="14.65" r="1.5" fill="#2b4c96"/><circle cx="9.40" cy="16.00" r="1.5" fill="#2b4c96"/><circle cx="6.15" cy="14.65" r="1.5" fill="#2b4c96"/><circle cx="4.80" cy="11.40" r="1.5" fill="#2b4c96"/><circle cx="6.15" cy="8.15" r="1.5" fill="#2b4c96"/><circle cx="9.40" cy="6.80" r="1.5" fill="#2b4c96"/><circle cx="12.65" cy="8.15" r="1.5" fill="#2b4c96"/><circle cx="9.4" cy="11.4" r="4.3" fill="#7397dc" stroke="#26458e" stroke-width="1"/><rect x="7.6" y="9.6" width="3.6" height="3.6" fill="#f4f6fb" stroke="#2b4c96" stroke-width="0.8"/></svg><div class="t" style="left:20px;top:688.9px;font-size:10.7px;line-height:10.7px;color:#111;">WSBA00000044611</div><div class="t" style="left:147.3px;top:688.7px;font-size:11px;line-height:11px;color:#111;">Evening MBA</div><div class="t" style="left:246.4px;top:688.7px;width:30px;overflow:hidden;font-size:11px;line-height:11px;color:#111;">Evenir</div><div class="r" style="left:0;top:703px;width:276px;height:1px;background:#e3e3e3;"></div><svg class="r" style="left:2px;top:704px" width="16" height="17" viewBox="0 0 16 17"><path d="M0.5 0.5 H7.5 L10.5 3.5 V14.5 H0.5 Z" fill="#fff" stroke="#7d8ba0"/><path d="M7.5 0.5 V3.5 H10.5" fill="none" stroke="#3a4a66"/><circle cx="14.00" cy="11.40" r="1.5" fill="#2b4c96"/><circle cx="12.65" cy="14.65" r="1.5" fill="#2b4c96"/><circle cx="9.40" cy="16.00" r="1.5" fill="#2b4c96"/><circle cx="6.15" cy="14.65" r="1.5" fill="#2b4c96"/><circle cx="4.80" cy="11.40" r="1.5" fill="#2b4c96"/><circle cx="6.15" cy="8.15" r="1.5" fill="#2b4c96"/><circle cx="9.40" cy="6.80" r="1.5" fill="#2b4c96"/><circle cx="12.65" cy="8.15" r="1.5" fill="#2b4c96"/><circle cx="9.4" cy="11.4" r="4.3" fill="#7397dc" stroke="#26458e" stroke-width="1"/><rect x="7.6" y="9.6" width="3.6" height="3.6" fill="#f4f6fb" stroke="#2b4c96" stroke-width="0.8"/></svg><div class="t" style="left:20px;top:707.9px;font-size:10.7px;line-height:10.7px;color:#111;">WSBA00000045208</div><div class="t" style="left:147.3px;top:707.7px;font-size:11px;line-height:11px;color:#111;">BBA BEL</div><div class="t" style="left:246.4px;top:707.7px;width:30px;overflow:hidden;font-size:11px;line-height:11px;color:#111;">BBA</div><div class="r" style="left:0;top:722px;width:276px;height:1px;background:#e3e3e3;"></div><svg class="r" style="left:2px;top:723px" width="16" height="17" viewBox="0 0 16 17"><path d="M0.5 0.5 H7.5 L10.5 3.5 V14.5 H0.5 Z" fill="#fff" stroke="#7d8ba0"/><path d="M7.5 0.5 V3.5 H10.5" fill="none" stroke="#3a4a66"/><circle cx="14.00" cy="11.40" r="1.5" fill="#2b4c96"/><circle cx="12.65" cy="14.65" r="1.5" fill="#2b4c96"/><circle cx="9.40" cy="16.00" r="1.5" fill="#2b4c96"/><circle cx="6.15" cy="14.65" r="1.5" fill="#2b4c96"/><circle cx="4.80" cy="11.40" r="1.5" fill="#2b4c96"/><circle cx="6.15" cy="8.15" r="1.5" fill="#2b4c96"/><circle cx="9.40" cy="6.80" r="1.5" fill="#2b4c96"/><circle cx="12.65" cy="8.15" r="1.5" fill="#2b4c96"/><circle cx="9.4" cy="11.4" r="4.3" fill="#7397dc" stroke="#26458e" stroke-width="1"/><rect x="7.6" y="9.6" width="3.6" height="3.6" fill="#f4f6fb" stroke="#2b4c96" stroke-width="0.8"/></svg><div class="t" style="left:20px;top:726.9px;font-size:10.7px;line-height:10.7px;color:#111;">WSBA00000044701</div><div class="t" style="left:147.3px;top:726.7px;font-size:11px;line-height:11px;color:#111;">BBA BEL</div><div class="t" style="left:246.4px;top:726.7px;width:30px;overflow:hidden;font-size:11px;line-height:11px;color:#111;">BBA</div></div><div class="r" style="left:524px;top:214px;width:15px;height:755px;background:#f0f0f0;"></div><div class="r" style="left:524px;top:214px;width:15px;height:15px;background:#fff;border:1px solid #adadad;box-sizing:border-box;"></div><svg class="r" style="left:527px;top:219px;" width="9" height="5" viewBox="0 0 9 5"><path d="M0.5 4.5 H8.5 L4.5 0.5 Z" fill="#777"/></svg><div class="r" style="left:524px;top:229px;width:15px;height:549px;background:#fff;border:1px solid #adadad;border-top:2px solid #b8b8b8;box-sizing:border-box;"></div><div class="r" style="left:524px;top:952px;width:15px;height:16px;background:#fff;border:1px solid #d0d0d0;box-sizing:border-box;"></div><svg class="r" style="left:527px;top:958px;" width="9" height="5" viewBox="0 0 9 5"><path d="M0.5 0.5 H8.5 L4.5 4.5 Z" fill="#777"/></svg><div class="r" style="left:242px;top:970px;width:279px;height:15px;background:#f0f0f0;"></div><div class="r" style="left:242px;top:970px;width:15px;height:15px;background:#fff;border:1px solid #adadad;box-sizing:border-box;"></div><svg class="r" style="left:247px;top:973px;" width="5" height="8" viewBox="0 0 5 8"><path d="M4.5 0 V8 L0.5 4 Z" fill="#777"/></svg><div class="r" style="left:257px;top:970px;width:45px;height:15px;background:#fff;border:1px solid #adadad;box-sizing:border-box;"></div><div class="r" style="left:506px;top:970px;width:15px;height:15px;background:#fff;border:1px solid #adadad;box-sizing:border-box;"></div><svg class="r" style="left:511px;top:973px;" width="5" height="8" viewBox="0 0 5 8"><path d="M0.5 0 V8 L4.5 4 Z" fill="#777"/></svg><div class="t" style="left:247.5px;top:992px;font-size:11.3px;line-height:20px;color:#111;font-weight:normal;">1 - 50 of 914</div><div class="t" style="left:473.3px;top:993px;font-size:11.3px;line-height:20px;color:#111;font-weight:normal;">Page 1</div><svg class="r" style="left:523px;top:998px;" width="6" height="9" viewBox="0 0 6 9"><path d="M0 0 L6 4.5 L0 9 Z" fill="#1a3d8f"/></svg><div class="r" style="left:546px;top:152px;width:1374px;height:866px;background:#ffffff;"></div><div class="t" style="left:565.3px;top:168px;font-size:15.6px;line-height:20px;color:#333333;font-weight:bold;">WSBA00000044421</div><div class="t" style="left:564.0px;top:193px;font-size:12px;line-height:20px;color:#6b6b6b;font-weight:normal;">Applicant</div><svg class="r" style="left:673px;top:197px;" width="17" height="13" viewBox="0 0 17 13"><path d="M0 1.5 H5 V0 H8 V1.5 H17 V13 H0 Z" fill="#666"/><circle cx="5" cy="5.5" r="2" fill="#ddd"/><path d="M1.8 11 A3.2 2.8 0 0 1 8.2 11 Z" fill="#ddd"/><rect x="10" y="5" width="5" height="1.3" fill="#ddd"/><rect x="10" y="8" width="5" height="1.3" fill="#ddd"/></svg><div class="r" style="left:694px;top:208px;width:103px;height:1px;background:#0000ff;"></div><div class="t" style="left:709.5px;top:193px;font-size:11.6px;line-height:20px;color:#0000ff;font-weight:normal;">Charkowski, Ron</div><div class="t" style="left:564.0px;top:215px;font-size:12px;line-height:20px;color:#6b6b6b;font-weight:normal;">Term Applied</div><div class="r" style="left:675px;top:218px;width:316px;height:18px;background:#fff;border:1px solid #1670d2;border-right:none;box-sizing:border-box;"></div><div class="r" style="left:990px;top:217px;width:2px;height:20px;background:#1670d2;"></div><div class="t" style="left:676.5px;top:217px;font-size:12.2px;line-height:20px;color:#000;">Fall 2016</div><div class="t" style="left:1014.7px;top:193px;font-size:12px;line-height:20px;color:#6b6b6b;font-weight:normal;">Program Applied</div><div class="t" style="left:1014.7px;top:215px;font-size:12px;line-height:20px;color:#6b6b6b;font-weight:normal;">Plan Applied</div><div class="r" style="left:1125px;top:196px;width:316px;height:18px;background:#fff;border:1px solid #1670d2;border-right:none;box-sizing:border-box;"></div><div class="r" style="left:1440px;top:195px;width:2px;height:20px;background:#1670d2;"></div><div class="t" style="left:1126.5px;top:195px;font-size:12.2px;line-height:20px;color:#000;">Full-Time MBA</div><div class="r" style="left:1125px;top:218px;width:316px;height:18px;background:#fff;border:1px solid #1670d2;border-right:none;box-sizing:border-box;"></div><div class="r" style="left:1440px;top:217px;width:2px;height:20px;background:#1670d2;"></div><div class="t" style="left:1126.5px;top:217px;font-size:12.2px;line-height:20px;color:#000;">MBA in Arts Administration</div><div class="t" style="left:1464.3px;top:193px;font-size:11.85px;line-height:20px;color:#6b6b6b;font-weight:normal;">Application Stage</div><div class="t" style="left:1464.3px;top:215px;font-size:11.85px;line-height:20px;color:#6b6b6b;font-weight:normal;">Application Status</div><div class="r" style="left:1575px;top:196px;width:316px;height:18px;background:#fff;border:1px solid #1670d2;border-right:none;box-sizing:border-box;"></div><div class="r" style="left:1890px;top:195px;width:2px;height:20px;background:#1670d2;"></div><div class="t" style="left:1576.5px;top:195px;font-size:12.2px;line-height:20px;color:#000;">3-Admitted</div><div class="r" style="left:1575px;top:218px;width:316px;height:18px;background:#fff;border:1px solid #1670d2;border-right:none;box-sizing:border-box;"></div><div class="r" style="left:1890px;top:217px;width:2px;height:20px;background:#1670d2;"></div><div class="t" style="left:1576.5px;top:217px;font-size:12.2px;line-height:20px;color:#000;">AD-Deferred</div><div class="r" style="left:554px;top:253px;width:1366px;height:2px;background:#cccccc;"></div><div class="r" style="left:554px;top:255px;width:1338px;height:34px;background:linear-gradient(#f2f5fb, #f8f9fc 60%, #fcfcfe);"></div><div class="t" style="left:564.5px;top:264px;font-size:13.9px;line-height:20px;color:#0d4fa6;font-weight:normal;">Information</div><div class="t" style="left:564.0px;top:288px;font-size:12px;line-height:20px;color:#6b6b6b;font-weight:normal;">Applicant</div><svg class="r" style="left:852px;top:293px;" width="17" height="13" viewBox="0 0 17 13"><path d="M0 1.5 H5 V0 H8 V1.5 H17 V13 H0 Z" fill="#666"/><circle cx="5" cy="5.5" r="2" fill="#ddd"/><path d="M1.8 11 A3.2 2.8 0 0 1 8.2 11 Z" fill="#ddd"/><rect x="10" y="5" width="5" height="1.3" fill="#ddd"/><rect x="10" y="8" width="5" height="1.3" fill="#ddd"/></svg><div class="r" style="left:872px;top:304px;width:103px;height:1px;background:#0000ff;"></div><div class="t" style="left:887.5px;top:289px;font-size:11.6px;line-height:20px;color:#0000ff;font-weight:normal;">Charkowski, Ron</div><div class="r" style="left:554px;top:330px;width:1338px;height:1px;background:#c9c9c9;"></div><div class="r" style="left:554px;top:331px;width:1338px;height:34px;background:linear-gradient(#f2f5fb, #f8f9fc 60%, #fcfcfe);"></div><div class="t" style="left:564.5px;top:338px;font-size:13.9px;line-height:20px;color:#0d4fa6;font-weight:normal;">Section</div><div class="t" style="left:564.0px;top:363px;font-size:12px;line-height:20px;color:#6b6b6b;font-weight:normal;">Manually Submitted</div><div class="t" style="left:773.2px;top:364px;font-size:12.1px;line-height:20px;color:#111111;font-weight:normal;">Yes</div><div class="t" style="left:1239.2px;top:363px;font-size:12px;line-height:20px;color:#6b6b6b;font-weight:normal;">Current or Former</div><div class="t" style="left:1448.2px;top:364px;font-size:12.1px;line-height:20px;color:#111111;font-weight:normal;">No</div><div class="t" style="left:564.0px;top:385px;font-size:12px;line-height:20px;color:#6b6b6b;font-weight:normal;">Consortium Application</div><div class="t" style="left:773.2px;top:386px;font-size:12.1px;line-height:20px;color:#111111;font-weight:normal;">No</div><div class="t" style="left:1239.2px;top:385px;font-size:12px;line-height:20px;color:#6b6b6b;font-weight:normal;">Student Ranked Us</div><div class="t" style="left:1352.0px;top:363px;font-size:12px;line-height:20px;color:#6b6b6b;font-weight:normal;">UW-Madison...</div><div class="r" style="left:554px;top:426px;width:1338px;height:1px;background:#c9c9c9;"></div><div class="r" style="left:554px;top:427px;width:1338px;height:34px;background:linear-gradient(#f2f5fb, #f8f9fc 60%, #fcfcfe);"></div><div class="t" style="left:564.5px;top:434px;font-size:13.9px;line-height:20px;color:#0d4fa6;font-weight:normal;">Application Information</div><div class="t" style="left:564.0px;top:459px;font-size:12px;line-height:20px;color:#6b6b6b;font-weight:normal;">Source</div><div class="t" style="left:773.2px;top:460px;font-size:12.1px;line-height:20px;color:#111111;font-weight:normal;">Application</div><div class="t" style="left:1239.2px;top:459px;font-size:12px;line-height:20px;color:#6b6b6b;font-weight:normal;">State</div><div class="t" style="left:1448.2px;top:460px;font-size:12.1px;line-height:20px;color:#111111;font-weight:normal;">Active</div><div class="t" style="left:564.0px;top:481px;font-size:12px;line-height:20px;color:#6b6b6b;font-weight:normal;">Cycle</div><div class="t" style="left:773.2px;top:482px;font-size:12.1px;line-height:20px;color:#111111;font-weight:normal;">None</div><div class="t" style="left:1239.2px;top:481px;font-size:12px;line-height:20px;color:#6b6b6b;font-weight:normal;">Ranking</div><div class="t" style="left:1448.2px;top:482px;font-size:12.1px;line-height:20px;color:#111111;font-weight:normal;">Warm</div><div class="t" style="left:564.0px;top:503px;font-size:12px;line-height:20px;color:#6b6b6b;font-weight:normal;">Application Summary Ready</div><div class="t" style="left:773.2px;top:504px;font-size:12.1px;line-height:20px;color:#111111;font-weight:normal;">Yes</div><div class="r" style="left:554px;top:544px;width:1338px;height:1px;background:#c9c9c9;"></div><div class="r" style="left:554px;top:545px;width:1338px;height:34px;background:linear-gradient(#f2f5fb, #f8f9fc 60%, #fcfcfe);"></div><div class="t" style="left:564.5px;top:552px;font-size:13.9px;line-height:20px;color:#0d4fa6;font-weight:normal;">Application Dates</div><div class="t" style="left:564.0px;top:577px;font-size:12px;line-height:20px;color:#6b6b6b;font-weight:normal;">Application Created</div><div class="t" style="left:773.2px;top:578px;font-size:11.5px;line-height:20px;color:#111111;font-weight:normal;">11/30/2015 4:26 PM</div><div class="t" style="left:1239.2px;top:577px;font-size:12px;line-height:20px;color:#6b6b6b;font-weight:normal;">Last Edit</div><div class="t" style="left:564.0px;top:599px;font-size:12px;line-height:20px;color:#6b6b6b;font-weight:normal;">Term Created</div><div class="t" style="left:773.2px;top:600px;font-size:12.1px;line-height:20px;color:#111111;font-weight:normal;">Fall 2016</div><div class="t" style="left:1239.2px;top:599px;font-size:12px;line-height:20px;color:#6b6b6b;font-weight:normal;">Submitted</div><div class="t" style="left:1448.2px;top:600px;font-size:11.5px;line-height:20px;color:#111111;font-weight:normal;">6/29/2017 8:08 AM</div><div class="r" style="left:554px;top:640px;width:1338px;height:1px;background:#c9c9c9;"></div><div class="r" style="left:554px;top:641px;width:1338px;height:34px;background:linear-gradient(#f2f5fb, #f8f9fc 60%, #fcfcfe);"></div><div class="t" style="left:564.5px;top:648px;font-size:13.9px;line-height:20px;color:#0d4fa6;font-weight:normal;">Fees</div><div class="t" style="left:564.0px;top:673px;font-size:12px;line-height:20px;color:#6b6b6b;font-weight:normal;">Application Fee Paid</div><div class="t" style="left:773.2px;top:674px;font-size:12.1px;line-height:20px;color:#111111;font-weight:normal;">No</div><div class="t" style="left:1239.2px;top:673px;font-size:12px;line-height:20px;color:#6b6b6b;font-weight:normal;">Application Fee Reason</div><div class="t" style="left:564.0px;top:695px;font-size:12px;line-height:20px;color:#6b6b6b;font-weight:normal;">Enrollment Deposit Paid</div><div class="t" style="left:773.2px;top:696px;font-size:12.1px;line-height:20px;color:#111111;font-weight:normal;">No</div><div class="t" style="left:1239.2px;top:695px;font-size:12px;line-height:20px;color:#6b6b6b;font-weight:normal;">Enrollment Deposit Reason</div><div class="r" style="left:554px;top:736px;width:1338px;height:1px;background:#c9c9c9;"></div><div class="r" style="left:554px;top:737px;width:1338px;height:34px;background:linear-gradient(#f2f5fb, #f8f9fc 60%, #fcfcfe);"></div><div class="t" style="left:564.5px;top:744px;font-size:13.9px;line-height:20px;color:#0d4fa6;font-weight:normal;">Key Metrics</div><div class="t" style="left:564.0px;top:769px;font-size:12px;line-height:20px;color:#6b6b6b;font-weight:normal;">Official UG GPA</div><div class="t" style="left:1239.2px;top:769px;font-size:12px;line-height:20px;color:#6b6b6b;font-weight:normal;">Months Worked</div><div class="t" style="left:564.0px;top:791px;font-size:12px;line-height:20px;color:#6b6b6b;font-weight:normal;">Official Grad GPA</div><div class="t" style="left:1239.2px;top:791px;font-size:12px;line-height:20px;color:#6b6b6b;font-weight:normal;">Leadership Experience Years</div><div class="r" style="left:554px;top:832px;width:1338px;height:1px;background:#c9c9c9;"></div><div class="r" style="left:554px;top:833px;width:1338px;height:34px;background:linear-gradient(#f2f5fb, #f8f9fc 60%, #fcfcfe);"></div><div class="t" style="left:564.5px;top:840px;font-size:13.9px;line-height:20px;color:#0d4fa6;font-weight:normal;">Applicant Progress</div><div class="t" style="left:564.0px;top:865px;font-size:12px;line-height:20px;color:#6b6b6b;font-weight:normal;">Demographics</div><div class="t" style="left:1239.2px;top:865px;font-size:12px;line-height:20px;color:#6b6b6b;font-weight:normal;">Test Scores</div><div class="t" style="left:564.0px;top:887px;font-size:12px;line-height:20px;color:#6b6b6b;font-weight:normal;">Academic History</div><div class="t" style="left:1239.2px;top:887px;font-size:12px;line-height:20px;color:#6b6b6b;font-weight:normal;">Recommendations</div><div class="t" style="left:564.0px;top:909px;font-size:12px;line-height:20px;color:#6b6b6b;font-weight:normal;">Employment History</div><div class="t" style="left:1239.2px;top:909px;font-size:12px;line-height:20px;color:#6b6b6b;font-weight:normal;">EEMBA Employer Authorization</div><div class="t" style="left:564.0px;top:931px;font-size:12px;line-height:20px;color:#6b6b6b;font-weight:normal;">Essays</div><div class="t" style="left:1239.2px;top:931px;font-size:12px;line-height:20px;color:#6b6b6b;font-weight:normal;">Residency</div><div class="t" style="left:564.0px;top:953px;font-size:12px;line-height:20px;color:#6b6b6b;font-weight:normal;">PhD Survey</div><div class="t" style="left:1239.2px;top:953px;font-size:12px;line-height:20px;color:#6b6b6b;font-weight:normal;">Final Questions</div><div class="t" style="left:564.0px;top:975px;font-size:12px;line-height:20px;color:#6b6b6b;font-weight:normal;">Resume</div><div class="t" style="left:1239.2px;top:975px;font-size:12px;line-height:20px;color:#6b6b6b;font-weight:normal;">Pay Submit</div><div class="r" style="left:554px;top:1016px;width:1338px;height:1px;background:#c9c9c9;"></div><div class="r" style="left:1903px;top:256px;width:16px;height:762px;background:#f0f0f0;"></div><svg class="r" style="left:1906px;top:261px;" width="9" height="6" viewBox="0 0 9 6"><path d="M1 5 L4.5 1.5 L8 5 Z" fill="#444"/></svg><div class="r" style="left:1903px;top:275px;width:16px;height:169px;background:linear-gradient(90deg,#f2f2f2,#dcdcdc 60%,#c8c8c8);border:1px solid #8f8f8f;border-radius:2px;box-sizing:border-box;"></div><svg class="r" style="left:1907px;top:354px;" width="8" height="9" viewBox="0 0 8 9"><g stroke="#555" stroke-width="1"><line x1="0" y1="1" x2="7" y2="1"/><line x1="0" y1="3.5" x2="7" y2="3.5"/><line x1="0" y1="6" x2="7" y2="6"/><line x1="0" y1="8.5" x2="7" y2="8.5"/></g></svg><svg class="r" style="left:1906px;top:1006px;" width="9" height="5" viewBox="0 0 9 5"><path d="M1 0.5 L8 0.5 L4.5 4 Z" fill="#444"/></svg><div class="r" style="left:0px;top:1018px;width:1920px;height:1px;background:#c6c6c6;"></div><div class="r" style="left:0px;top:1019px;width:1920px;height:21px;background:#f0f0f0;"></div><div class="r" style="left:0px;top:1040px;width:1920px;height:1px;background:#38424e;"></div><div class="r" style="left:0px;top:1041px;width:1920px;height:1px;background:#c8d8ea;"></div><div class="t" style="left:7.8px;top:1019px;font-size:11.1px;line-height:20px;color:#333;font-weight:normal;">Done</div><div class="r" style="left:1672px;top:1019px;width:38px;height:21px;background:#c8c8c8;"></div><svg class="r" style="left:1684px;top:1022px;" width="15" height="14" viewBox="0 0 15 14"><rect x="0.5" y="0.5" width="14" height="13" fill="none" stroke="#666"/><line x1="4.5" y1="0.5" x2="4.5" y2="13.5" stroke="#666"/></svg><svg class="r" style="left:1721px;top:1021px;" width="14" height="15" viewBox="0 0 14 15"><path d="M0.5 1.5 H6.5 L7 2.5 L7.5 1.5 H13.5 V12.5 H7.5 L7 14 L6.5 12.5 H0.5 Z" fill="none" stroke="#666"/><g stroke="#777"><line x1="2" y1="4" x2="5.5" y2="4"/><line x1="2" y1="6.5" x2="5.5" y2="6.5"/><line x1="2" y1="9" x2="5.5" y2="9"/><line x1="8.5" y1="4" x2="12" y2="4"/><line x1="8.5" y1="6.5" x2="12" y2="6.5"/><line x1="8.5" y1="9" x2="12" y2="9"/><line x1="7" y1="2" x2="7" y2="13"/></g></svg><div class="r" style="left:1753px;top:1028px;width:6px;height:2px;background:#666;"></div><div class="r" style="left:1767px;top:1028px;width:96px;height:1px;background:#b0b0b0;"></div><div class="r" style="left:1813px;top:1025px;width:1px;height:7px;background:#b0b0b0;"></div><div class="r" style="left:1763px;top:1023px;width:4px;height:12px;background:#666;"></div><svg class="r" style="left:1866px;top:1024px;" width="10" height="10" viewBox="0 0 10 10"><rect x="0" y="4" width="9" height="2" fill="#666"/><rect x="3.5" y="0" width="2" height="9" fill="#666"/></svg><div class="t" style="left:1890.3px;top:1019px;font-size:11.2px;line-height:20px;color:#333;font-weight:normal;">10%</div><div class="r" style="left:181px;top:1040px;width:59px;height:1px;background:#141414;"></div><div class="r" style="left:182px;top:1041px;width:57px;height:1px;background:#ffffff;"></div></div>
</body></html>
